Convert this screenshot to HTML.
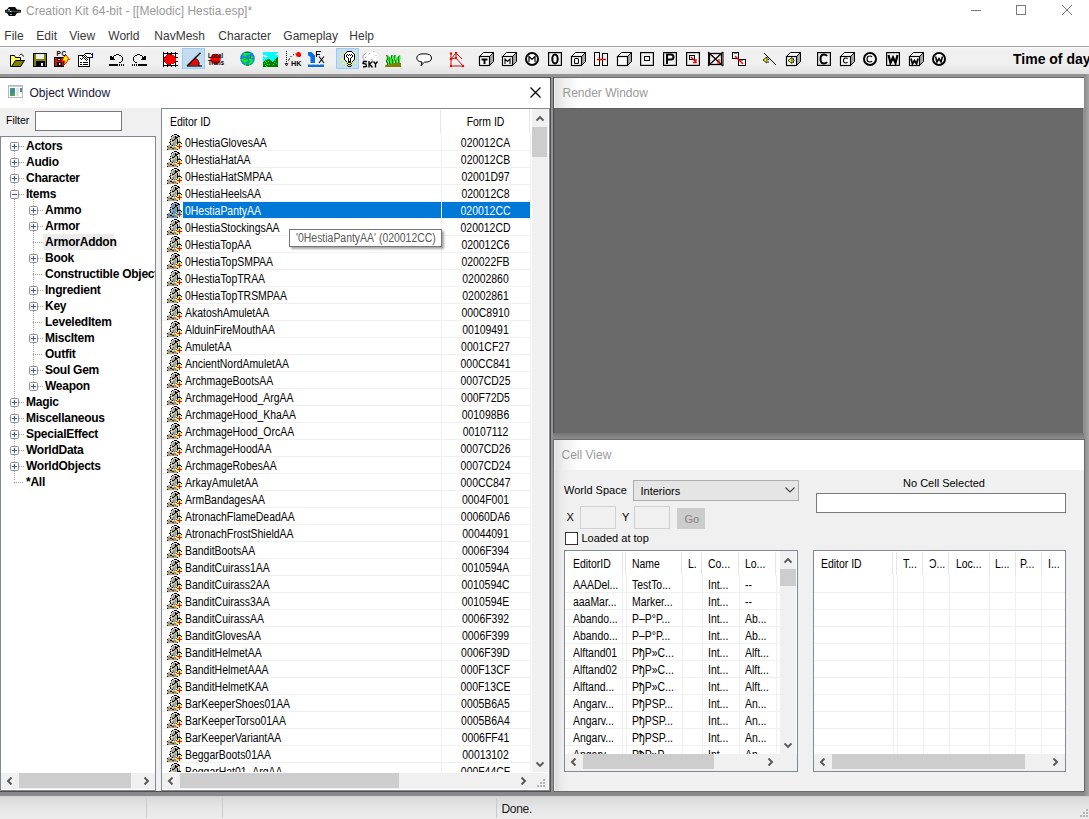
<!DOCTYPE html>
<html><head><meta charset="utf-8">
<style>
*{box-sizing:border-box}
html,body{margin:0;padding:0}
body{width:1089px;height:819px;overflow:hidden;position:relative;background:#f0f0f0;font-family:"Liberation Sans",sans-serif;font-size:11px;color:#000}
.a{position:absolute}
.t{position:absolute;white-space:nowrap;line-height:1}
.ic{position:absolute;overflow:visible}
</style></head><body>
<svg width="0" height="0" style="position:absolute">
<defs>
<symbol id="arm" viewBox="0 0 16 16" shape-rendering="crispEdges"><rect x="7" y="0" width="3" height="1" fill="#000"/><rect x="5" y="1" width="1" height="1" fill="#000"/><rect x="6" y="1" width="1" height="1" fill="#a8a8a8"/><rect x="7" y="1" width="3" height="1" fill="#e0e0e0"/><rect x="10" y="1" width="2" height="1" fill="#000"/><rect x="4" y="2" width="1" height="1" fill="#000"/><rect x="5" y="2" width="1" height="1" fill="#e0e0e0"/><rect x="6" y="2" width="2" height="1" fill="#a8a8a8"/><rect x="8" y="2" width="1" height="1" fill="#000"/><rect x="9" y="2" width="2" height="1" fill="#a8a8a8"/><rect x="11" y="2" width="2" height="1" fill="#000"/><rect x="4" y="3" width="1" height="1" fill="#a8a8a8"/><rect x="5" y="3" width="1" height="1" fill="#e0e0e0"/><rect x="6" y="3" width="1" height="1" fill="#808080"/><rect x="7" y="3" width="1" height="1" fill="#a8a8a8"/><rect x="8" y="3" width="3" height="1" fill="#000"/><rect x="11" y="3" width="1" height="1" fill="#e0e0e0"/><rect x="12" y="3" width="1" height="1" fill="#a8a8a8"/><rect x="4" y="4" width="4" height="1" fill="#a8a8a8"/><rect x="8" y="4" width="1" height="1" fill="#000"/><rect x="9" y="4" width="1" height="1" fill="#a00000"/><rect x="10" y="4" width="1" height="1" fill="#ffff00"/><rect x="11" y="4" width="1" height="1" fill="#e0e0e0"/><rect x="12" y="4" width="1" height="1" fill="#a8a8a8"/><rect x="3" y="5" width="1" height="1" fill="#000"/><rect x="4" y="5" width="1" height="1" fill="#a8a8a8"/><rect x="5" y="5" width="1" height="1" fill="#808080"/><rect x="6" y="5" width="1" height="1" fill="#a8a8a8"/><rect x="7" y="5" width="1" height="1" fill="#000"/><rect x="8" y="5" width="1" height="1" fill="#a0a000"/><rect x="9" y="5" width="1" height="1" fill="#a8a8a8"/><rect x="10" y="5" width="1" height="1" fill="#000"/><rect x="11" y="5" width="1" height="1" fill="#e0e0e0"/><rect x="12" y="5" width="1" height="1" fill="#a8a8a8"/><rect x="3" y="6" width="1" height="1" fill="#a8a8a8"/><rect x="5" y="6" width="2" height="1" fill="#000"/><rect x="7" y="6" width="1" height="1" fill="#a0a000"/><rect x="8" y="6" width="2" height="1" fill="#c4c4d8"/><rect x="10" y="6" width="1" height="1" fill="#000"/><rect x="11" y="6" width="1" height="1" fill="#e0e0e0"/><rect x="12" y="6" width="1" height="1" fill="#a8a8a8"/><rect x="3" y="7" width="1" height="1" fill="#000"/><rect x="4" y="7" width="1" height="1" fill="#a8a8a8"/><rect x="5" y="7" width="1" height="1" fill="#a0a000"/><rect x="6" y="7" width="2" height="1" fill="#c4c4d8"/><rect x="8" y="7" width="1" height="1" fill="#808080"/><rect x="9" y="7" width="1" height="1" fill="#c4c4d8"/><rect x="10" y="7" width="1" height="1" fill="#000"/><rect x="11" y="7" width="1" height="1" fill="#a8a8a8"/><rect x="12" y="7" width="1" height="1" fill="#008888"/><rect x="2" y="8" width="1" height="1" fill="#000"/><rect x="3" y="8" width="1" height="1" fill="#a0a000"/><rect x="4" y="8" width="2" height="1" fill="#e0e0e0"/><rect x="6" y="8" width="4" height="1" fill="#a8a8a8"/><rect x="10" y="8" width="4" height="1" fill="#000"/><rect x="3" y="9" width="1" height="1" fill="#000"/><rect x="4" y="9" width="1" height="1" fill="#e0e0e0"/><rect x="5" y="9" width="1" height="1" fill="#a8a8a8"/><rect x="6" y="9" width="1" height="1" fill="#808080"/><rect x="7" y="9" width="3" height="1" fill="#a8a8a8"/><rect x="10" y="9" width="1" height="1" fill="#000"/><rect x="11" y="9" width="3" height="1" fill="#ffff00"/><rect x="14" y="9" width="1" height="1" fill="#000"/><rect x="3" y="10" width="1" height="1" fill="#000"/><rect x="4" y="10" width="2" height="1" fill="#a8a8a8"/><rect x="6" y="10" width="1" height="1" fill="#808080"/><rect x="7" y="10" width="2" height="1" fill="#a8a8a8"/><rect x="10" y="10" width="1" height="1" fill="#008000"/><rect x="11" y="10" width="1" height="1" fill="#c8eeee"/><rect x="12" y="10" width="1" height="1" fill="#ff0000"/><rect x="13" y="10" width="1" height="1" fill="#c8eeee"/><rect x="14" y="10" width="1" height="1" fill="#ffff00"/><rect x="1" y="11" width="2" height="1" fill="#a8a8a8"/><rect x="4" y="11" width="1" height="1" fill="#a0a000"/><rect x="5" y="11" width="1" height="1" fill="#000"/><rect x="6" y="11" width="1" height="1" fill="#a8a8a8"/><rect x="7" y="11" width="1" height="1" fill="#808080"/><rect x="8" y="11" width="1" height="1" fill="#a8a8a8"/><rect x="9" y="11" width="1" height="1" fill="#008000"/><rect x="10" y="11" width="2" height="1" fill="#c8eeee"/><rect x="12" y="11" width="1" height="1" fill="#ff0000"/><rect x="13" y="11" width="1" height="1" fill="#c8eeee"/><rect x="0" y="12" width="1" height="1" fill="#000"/><rect x="1" y="12" width="2" height="1" fill="#a8a8a8"/><rect x="3" y="12" width="2" height="1" fill="#a0a000"/><rect x="5" y="12" width="2" height="1" fill="#e0e0e0"/><rect x="7" y="12" width="1" height="1" fill="#a8a8a8"/><rect x="9" y="12" width="1" height="1" fill="#ffff00"/><rect x="10" y="12" width="5" height="1" fill="#ff0000"/><rect x="0" y="13" width="1" height="1" fill="#a8a8a8"/><rect x="1" y="13" width="1" height="1" fill="#808080"/><rect x="2" y="13" width="1" height="1" fill="#a8a8a8"/><rect x="3" y="13" width="2" height="1" fill="#000"/><rect x="5" y="13" width="2" height="1" fill="#a8a8a8"/><rect x="7" y="13" width="2" height="1" fill="#a0a000"/><rect x="9" y="13" width="1" height="1" fill="#ffff00"/><rect x="10" y="13" width="2" height="1" fill="#c8eeee"/><rect x="12" y="13" width="1" height="1" fill="#ff0000"/><rect x="13" y="13" width="1" height="1" fill="#c8eeee"/><rect x="0" y="14" width="2" height="1" fill="#a8a8a8"/><rect x="2" y="14" width="1" height="1" fill="#a0a000"/><rect x="3" y="14" width="2" height="1" fill="#a8a8a8"/><rect x="5" y="14" width="2" height="1" fill="#a00000"/><rect x="7" y="14" width="1" height="1" fill="#a8a8a8"/><rect x="8" y="14" width="1" height="1" fill="#808080"/><rect x="9" y="14" width="1" height="1" fill="#a8a8a8"/><rect x="10" y="14" width="1" height="1" fill="#ffff00"/><rect x="12" y="14" width="1" height="1" fill="#ff0000"/><rect x="14" y="14" width="1" height="1" fill="#ffff00"/><rect x="0" y="15" width="1" height="1" fill="#000"/><rect x="1" y="15" width="1" height="1" fill="#a0a000"/><rect x="2" y="15" width="4" height="1" fill="#a8a8a8"/><rect x="6" y="15" width="1" height="1" fill="#808080"/><rect x="7" y="15" width="3" height="1" fill="#a8a8a8"/><rect x="10" y="15" width="1" height="1" fill="#000"/></symbol>
<symbol id="arms" viewBox="0 0 16 16" shape-rendering="crispEdges"><rect x="7" y="0" width="3" height="1" fill="#000"/><rect x="5" y="1" width="1" height="1" fill="#000"/><rect x="6" y="1" width="1" height="1" fill="#6d97b8"/><rect x="7" y="1" width="3" height="1" fill="#91bbdc"/><rect x="10" y="1" width="2" height="1" fill="#000"/><rect x="4" y="2" width="1" height="1" fill="#000"/><rect x="5" y="2" width="1" height="1" fill="#91bbdc"/><rect x="6" y="2" width="2" height="1" fill="#6d97b8"/><rect x="8" y="2" width="1" height="1" fill="#000"/><rect x="9" y="2" width="2" height="1" fill="#6d97b8"/><rect x="11" y="2" width="2" height="1" fill="#000"/><rect x="4" y="3" width="1" height="1" fill="#6d97b8"/><rect x="5" y="3" width="1" height="1" fill="#91bbdc"/><rect x="6" y="3" width="1" height="1" fill="#537d9e"/><rect x="7" y="3" width="1" height="1" fill="#6d97b8"/><rect x="8" y="3" width="3" height="1" fill="#000"/><rect x="11" y="3" width="1" height="1" fill="#91bbdc"/><rect x="12" y="3" width="1" height="1" fill="#6d97b8"/><rect x="4" y="4" width="4" height="1" fill="#6d97b8"/><rect x="8" y="4" width="1" height="1" fill="#000"/><rect x="9" y="4" width="1" height="1" fill="#682a4b"/><rect x="10" y="4" width="1" height="1" fill="#a5cf4b"/><rect x="11" y="4" width="1" height="1" fill="#91bbdc"/><rect x="12" y="4" width="1" height="1" fill="#6d97b8"/><rect x="3" y="5" width="1" height="1" fill="#000"/><rect x="4" y="5" width="1" height="1" fill="#6d97b8"/><rect x="5" y="5" width="1" height="1" fill="#537d9e"/><rect x="6" y="5" width="1" height="1" fill="#6d97b8"/><rect x="7" y="5" width="1" height="1" fill="#000"/><rect x="8" y="5" width="1" height="1" fill="#68924b"/><rect x="9" y="5" width="1" height="1" fill="#6d97b8"/><rect x="10" y="5" width="1" height="1" fill="#000"/><rect x="11" y="5" width="1" height="1" fill="#91bbdc"/><rect x="12" y="5" width="1" height="1" fill="#6d97b8"/><rect x="3" y="6" width="1" height="1" fill="#6d97b8"/><rect x="5" y="6" width="2" height="1" fill="#000"/><rect x="7" y="6" width="1" height="1" fill="#68924b"/><rect x="8" y="6" width="2" height="1" fill="#7fa9d7"/><rect x="10" y="6" width="1" height="1" fill="#000"/><rect x="11" y="6" width="1" height="1" fill="#91bbdc"/><rect x="12" y="6" width="1" height="1" fill="#6d97b8"/><rect x="3" y="7" width="1" height="1" fill="#000"/><rect x="4" y="7" width="1" height="1" fill="#6d97b8"/><rect x="5" y="7" width="1" height="1" fill="#68924b"/><rect x="6" y="7" width="2" height="1" fill="#7fa9d7"/><rect x="8" y="7" width="1" height="1" fill="#537d9e"/><rect x="9" y="7" width="1" height="1" fill="#7fa9d7"/><rect x="10" y="7" width="1" height="1" fill="#000"/><rect x="11" y="7" width="1" height="1" fill="#6d97b8"/><rect x="12" y="7" width="1" height="1" fill="#0082a3"/><rect x="2" y="8" width="1" height="1" fill="#000"/><rect x="3" y="8" width="1" height="1" fill="#68924b"/><rect x="4" y="8" width="2" height="1" fill="#91bbdc"/><rect x="6" y="8" width="4" height="1" fill="#6d97b8"/><rect x="10" y="8" width="4" height="1" fill="#000"/><rect x="3" y="9" width="1" height="1" fill="#000"/><rect x="4" y="9" width="1" height="1" fill="#91bbdc"/><rect x="5" y="9" width="1" height="1" fill="#6d97b8"/><rect x="6" y="9" width="1" height="1" fill="#537d9e"/><rect x="7" y="9" width="3" height="1" fill="#6d97b8"/><rect x="10" y="9" width="1" height="1" fill="#000"/><rect x="11" y="9" width="3" height="1" fill="#a5cf4b"/><rect x="14" y="9" width="1" height="1" fill="#000"/><rect x="3" y="10" width="1" height="1" fill="#000"/><rect x="4" y="10" width="2" height="1" fill="#6d97b8"/><rect x="6" y="10" width="1" height="1" fill="#537d9e"/><rect x="7" y="10" width="2" height="1" fill="#6d97b8"/><rect x="10" y="10" width="1" height="1" fill="#007d4b"/><rect x="11" y="10" width="1" height="1" fill="#82c4e5"/><rect x="12" y="10" width="1" height="1" fill="#a52a4b"/><rect x="13" y="10" width="1" height="1" fill="#82c4e5"/><rect x="14" y="10" width="1" height="1" fill="#a5cf4b"/><rect x="1" y="11" width="2" height="1" fill="#6d97b8"/><rect x="4" y="11" width="1" height="1" fill="#68924b"/><rect x="5" y="11" width="1" height="1" fill="#000"/><rect x="6" y="11" width="1" height="1" fill="#6d97b8"/><rect x="7" y="11" width="1" height="1" fill="#537d9e"/><rect x="8" y="11" width="1" height="1" fill="#6d97b8"/><rect x="9" y="11" width="1" height="1" fill="#007d4b"/><rect x="10" y="11" width="2" height="1" fill="#82c4e5"/><rect x="12" y="11" width="1" height="1" fill="#a52a4b"/><rect x="13" y="11" width="1" height="1" fill="#82c4e5"/><rect x="0" y="12" width="1" height="1" fill="#000"/><rect x="1" y="12" width="2" height="1" fill="#6d97b8"/><rect x="3" y="12" width="2" height="1" fill="#68924b"/><rect x="5" y="12" width="2" height="1" fill="#91bbdc"/><rect x="7" y="12" width="1" height="1" fill="#6d97b8"/><rect x="9" y="12" width="1" height="1" fill="#a5cf4b"/><rect x="10" y="12" width="5" height="1" fill="#a52a4b"/><rect x="0" y="13" width="1" height="1" fill="#6d97b8"/><rect x="1" y="13" width="1" height="1" fill="#537d9e"/><rect x="2" y="13" width="1" height="1" fill="#6d97b8"/><rect x="3" y="13" width="2" height="1" fill="#000"/><rect x="5" y="13" width="2" height="1" fill="#6d97b8"/><rect x="7" y="13" width="2" height="1" fill="#68924b"/><rect x="9" y="13" width="1" height="1" fill="#a5cf4b"/><rect x="10" y="13" width="2" height="1" fill="#82c4e5"/><rect x="12" y="13" width="1" height="1" fill="#a52a4b"/><rect x="13" y="13" width="1" height="1" fill="#82c4e5"/><rect x="0" y="14" width="2" height="1" fill="#6d97b8"/><rect x="2" y="14" width="1" height="1" fill="#68924b"/><rect x="3" y="14" width="2" height="1" fill="#6d97b8"/><rect x="5" y="14" width="2" height="1" fill="#682a4b"/><rect x="7" y="14" width="1" height="1" fill="#6d97b8"/><rect x="8" y="14" width="1" height="1" fill="#537d9e"/><rect x="9" y="14" width="1" height="1" fill="#6d97b8"/><rect x="10" y="14" width="1" height="1" fill="#a5cf4b"/><rect x="12" y="14" width="1" height="1" fill="#a52a4b"/><rect x="14" y="14" width="1" height="1" fill="#a5cf4b"/><rect x="0" y="15" width="1" height="1" fill="#000"/><rect x="1" y="15" width="1" height="1" fill="#68924b"/><rect x="2" y="15" width="4" height="1" fill="#6d97b8"/><rect x="6" y="15" width="1" height="1" fill="#537d9e"/><rect x="7" y="15" width="3" height="1" fill="#6d97b8"/><rect x="10" y="15" width="1" height="1" fill="#000"/></symbol>

<symbol id="chevL" viewBox="0 0 8 8"><path d="M5.5 0.5 L2 4 L5.5 7.5" fill="none" stroke="#555" stroke-width="1.9"/></symbol>
<symbol id="chevR" viewBox="0 0 8 8"><path d="M2.5 0.5 L6 4 L2.5 7.5" fill="none" stroke="#555" stroke-width="1.9"/></symbol>
<symbol id="chevU" viewBox="0 0 8 8"><path d="M0.5 5.5 L4 2 L7.5 5.5" fill="none" stroke="#555" stroke-width="1.9"/></symbol>
<symbol id="chevD" viewBox="0 0 8 8"><path d="M0.5 2.5 L4 6 L7.5 2.5" fill="none" stroke="#555" stroke-width="1.9"/></symbol>
<symbol id="plus" viewBox="0 0 9 9"><rect x="0.5" y="0.5" width="8" height="8" rx="1" fill="#f6f6f6" stroke="#919191"/><path d="M2 4.5 L7 4.5 M4.5 2 L4.5 7" stroke="#3b5aa0" stroke-width="1"/></symbol>
<symbol id="minus" viewBox="0 0 9 9"><rect x="0.5" y="0.5" width="8" height="8" rx="1" fill="#f6f6f6" stroke="#919191"/><path d="M2 4.5 L7 4.5" stroke="#3b5aa0" stroke-width="1"/></symbol>
<symbol id="grip" viewBox="0 0 8 8"><g fill="#b4b4b4"><rect x="6" y="0" width="2" height="2"/><rect x="3" y="3" width="2" height="2"/><rect x="6" y="3" width="2" height="2"/><rect x="0" y="6" width="2" height="2"/><rect x="3" y="6" width="2" height="2"/><rect x="6" y="6" width="2" height="2"/></g></symbol>
</defs>
</svg>
<div class="a" style="left:0px;top:0px;width:1089px;height:23px;background:#fff"></div>
<div class="t" style="left:26px;top:4.84px;font-size:12px;color:#9a9a9a">Creation Kit 64-bit - [[Melodic] Hestia.esp]*</div>
<svg class="ic" style="left:5px;top:7px" width="16" height="9" viewBox="0 0 16 9"><path d="M4 0 L10 0 L12 2.5 L16 3 L16 5.5 L12 6 L10 9 L4 9 L2 6 L0 5.5 L0 3 L2 2.5 Z" fill="#0a0a0a"/><path d="M0.5 4.3 L15.5 4.3" stroke="#7a9aa0" stroke-width="0.6"/><rect x="3" y="2" width="2" height="1.5" fill="#a0d0e0"/><rect x="5" y="4" width="1.5" height="1" fill="#c0e8f0"/><rect x="5" y="7" width="2" height="1" fill="#90c0d0"/></svg>
<div class="a" style="left:971px;top:10px;width:10px;height:1px;background:#7a7a7a"></div>
<div class="a" style="left:1016px;top:5px;width:10px;height:10px;border:1px solid #7a7a7a"></div>
<svg class="ic" style="left:1062px;top:5px" width="10" height="10" viewBox="0 0 10 10"><path d="M0 0 L10 10 M10 0 L0 10" stroke="#7a7a7a" stroke-width="1"/></svg>
<div class="a" style="left:0px;top:23px;width:1089px;height:23px;background:#fff"></div>
<div class="t" style="left:4.3px;top:29.84px;font-size:12px;color:#383838">File</div>
<div class="t" style="left:36.3px;top:29.84px;font-size:12px;color:#383838">Edit</div>
<div class="t" style="left:69.3px;top:29.84px;font-size:12px;color:#383838">View</div>
<div class="t" style="left:108.3px;top:29.84px;font-size:12px;color:#383838">World</div>
<div class="t" style="left:154.3px;top:29.84px;font-size:12px;color:#383838">NavMesh</div>
<div class="t" style="left:218.3px;top:29.84px;font-size:12px;color:#383838">Character</div>
<div class="t" style="left:283.3px;top:29.84px;font-size:12px;color:#383838">Gameplay</div>
<div class="t" style="left:349.3px;top:29.84px;font-size:12px;color:#383838">Help</div>
<div class="a" style="left:0px;top:46px;width:1089px;height:28px;border-top:1px solid #a0a0a0;background:linear-gradient(#ffffff 0px,#f0f0f0 2px,#efefef 18px,#e2e2e2 27px)"></div>
<div class="a" style="left:0px;top:74px;width:1089px;height:722px;background:#939393"></div>
<div class="a" style="left:0px;top:792px;width:1089px;height:4px;background:linear-gradient(#858585,#8c8c8c)"></div>
<div class="a" style="left:0px;top:796px;width:1089px;height:23px;background:linear-gradient(#d0d0d0,#dadada 2px,#e6e6e6 12px,#ececec 22px)"></div>
<div class="a" style="left:146px;top:798px;width:1px;height:20px;background:#cbcbcb"></div>
<div class="a" style="left:222px;top:798px;width:1px;height:20px;background:#cbcbcb"></div>
<div class="a" style="left:496px;top:798px;width:1px;height:20px;background:#cbcbcb"></div>
<svg class="ic" style="left:1080px;top:809px" width="8" height="8"><use href="#grip"/></svg>
<div class="t" style="left:501.5px;top:802.64px;font-size:12px;color:#1a1a1a;letter-spacing:-0.3px">Done.</div>
<div class="a" style="left:0px;top:77px;width:551px;height:715px;background:#505050"></div>
<div class="a" style="left:0px;top:78px;width:550px;height:713px;background:#f0f0f0"></div>
<div class="a" style="left:0px;top:78px;width:550px;height:30px;background:#fff"></div>
<svg class="ic" style="left:8px;top:85px" width="15" height="13" viewBox="0 0 15 13"><defs><linearGradient id="owg" x1="0" y1="0" x2="0.4" y2="1"><stop offset="0" stop-color="#5a86c0"/><stop offset="0.5" stop-color="#3f8a8a"/><stop offset="1" stop-color="#4aaa5a"/></linearGradient></defs><rect x="0.5" y="0.5" width="14" height="12" fill="#fff" stroke="#b4b8c0"/><rect x="1" y="1" width="13" height="1" fill="#c8ccd4"/><rect x="2" y="3" width="5" height="8" fill="url(#owg)"/><rect x="8" y="3" width="3" height="8" fill="#e2e2e2"/><rect x="12" y="3" width="2" height="4" fill="url(#owg)"/></svg>
<div class="t" style="left:29.5px;top:86.84px;font-size:12px;color:#16163a">Object Window</div>
<svg class="ic" style="left:530px;top:87px" width="11" height="11" viewBox="0 0 11 11"><path d="M0.5 0.5 L10.5 10.5 M10.5 0.5 L0.5 10.5" stroke="#000" stroke-width="1.2"/></svg>
<div class="t" style="left:6px;top:115.11px;font-size:10.5px;">Filter</div>
<div class="a" style="left:35px;top:111px;width:87px;height:20px;background:#fff;border:1px solid #7a7a7a"></div>
<div class="a" style="left:0px;top:136px;width:156px;height:655px;background:#fff;border:1px solid #828790"></div>
<div class="a" style="left:1px;top:137px;width:154px;height:636px;overflow:hidden">
<div class="a" style="left:13px;top:14px;width:1px;height:330px;background-image:linear-gradient(#a0a0a0 50%,transparent 50%);background-size:1px 2px"></div>
<div class="a" style="left:32px;top:62px;width:1px;height:186px;background-image:linear-gradient(#a0a0a0 50%,transparent 50%);background-size:1px 2px"></div>
<div class="a" style="left:14px;top:9px;width:9px;height:1px;background-image:linear-gradient(90deg,#a0a0a0 50%,transparent 50%);background-size:2px 1px"></div>
<svg class="ic" style="left:9px;top:5px" width="9" height="9"><use href="#plus"/></svg>
<div class="t" style="left:25px;top:3.14px;font-size:12px;font-weight:bold;letter-spacing:-0.25px">Actors</div>
<div class="a" style="left:14px;top:25px;width:9px;height:1px;background-image:linear-gradient(90deg,#a0a0a0 50%,transparent 50%);background-size:2px 1px"></div>
<svg class="ic" style="left:9px;top:21px" width="9" height="9"><use href="#plus"/></svg>
<div class="t" style="left:25px;top:19.14px;font-size:12px;font-weight:bold;letter-spacing:-0.25px">Audio</div>
<div class="a" style="left:14px;top:41px;width:9px;height:1px;background-image:linear-gradient(90deg,#a0a0a0 50%,transparent 50%);background-size:2px 1px"></div>
<svg class="ic" style="left:9px;top:37px" width="9" height="9"><use href="#plus"/></svg>
<div class="t" style="left:25px;top:35.14px;font-size:12px;font-weight:bold;letter-spacing:-0.25px">Character</div>
<div class="a" style="left:14px;top:57px;width:9px;height:1px;background-image:linear-gradient(90deg,#a0a0a0 50%,transparent 50%);background-size:2px 1px"></div>
<svg class="ic" style="left:9px;top:53px" width="9" height="9"><use href="#minus"/></svg>
<div class="t" style="left:25px;top:51.14px;font-size:12px;font-weight:bold;letter-spacing:-0.25px">Items</div>
<div class="a" style="left:33px;top:73px;width:9px;height:1px;background-image:linear-gradient(90deg,#a0a0a0 50%,transparent 50%);background-size:2px 1px"></div>
<svg class="ic" style="left:28px;top:69px" width="9" height="9"><use href="#plus"/></svg>
<div class="t" style="left:44px;top:67.14px;font-size:12px;font-weight:bold;letter-spacing:-0.25px">Ammo</div>
<div class="a" style="left:33px;top:89px;width:9px;height:1px;background-image:linear-gradient(90deg,#a0a0a0 50%,transparent 50%);background-size:2px 1px"></div>
<svg class="ic" style="left:28px;top:85px" width="9" height="9"><use href="#plus"/></svg>
<div class="t" style="left:44px;top:83.14px;font-size:12px;font-weight:bold;letter-spacing:-0.25px">Armor</div>
<div class="a" style="left:32px;top:105px;width:10px;height:1px;background-image:linear-gradient(90deg,#a0a0a0 50%,transparent 50%);background-size:2px 1px"></div>
<div class="a" style="left:42px;top:97px;width:71px;height:16px;background:#ececec"></div>
<div class="t" style="left:44px;top:99.14px;font-size:12px;font-weight:bold;letter-spacing:-0.25px">ArmorAddon</div>
<div class="a" style="left:33px;top:121px;width:9px;height:1px;background-image:linear-gradient(90deg,#a0a0a0 50%,transparent 50%);background-size:2px 1px"></div>
<svg class="ic" style="left:28px;top:117px" width="9" height="9"><use href="#plus"/></svg>
<div class="t" style="left:44px;top:115.14px;font-size:12px;font-weight:bold;letter-spacing:-0.25px">Book</div>
<div class="a" style="left:32px;top:137px;width:10px;height:1px;background-image:linear-gradient(90deg,#a0a0a0 50%,transparent 50%);background-size:2px 1px"></div>
<div class="t" style="left:44px;top:131.14px;font-size:12px;font-weight:bold;letter-spacing:-0.25px">Constructible Object</div>
<div class="a" style="left:33px;top:153px;width:9px;height:1px;background-image:linear-gradient(90deg,#a0a0a0 50%,transparent 50%);background-size:2px 1px"></div>
<svg class="ic" style="left:28px;top:149px" width="9" height="9"><use href="#plus"/></svg>
<div class="t" style="left:44px;top:147.14px;font-size:12px;font-weight:bold;letter-spacing:-0.25px">Ingredient</div>
<div class="a" style="left:33px;top:169px;width:9px;height:1px;background-image:linear-gradient(90deg,#a0a0a0 50%,transparent 50%);background-size:2px 1px"></div>
<svg class="ic" style="left:28px;top:165px" width="9" height="9"><use href="#plus"/></svg>
<div class="t" style="left:44px;top:163.14px;font-size:12px;font-weight:bold;letter-spacing:-0.25px">Key</div>
<div class="a" style="left:32px;top:185px;width:10px;height:1px;background-image:linear-gradient(90deg,#a0a0a0 50%,transparent 50%);background-size:2px 1px"></div>
<div class="t" style="left:44px;top:179.14px;font-size:12px;font-weight:bold;letter-spacing:-0.25px">LeveledItem</div>
<div class="a" style="left:33px;top:201px;width:9px;height:1px;background-image:linear-gradient(90deg,#a0a0a0 50%,transparent 50%);background-size:2px 1px"></div>
<svg class="ic" style="left:28px;top:197px" width="9" height="9"><use href="#plus"/></svg>
<div class="t" style="left:44px;top:195.14px;font-size:12px;font-weight:bold;letter-spacing:-0.25px">MiscItem</div>
<div class="a" style="left:32px;top:217px;width:10px;height:1px;background-image:linear-gradient(90deg,#a0a0a0 50%,transparent 50%);background-size:2px 1px"></div>
<div class="t" style="left:44px;top:211.14px;font-size:12px;font-weight:bold;letter-spacing:-0.25px">Outfit</div>
<div class="a" style="left:33px;top:233px;width:9px;height:1px;background-image:linear-gradient(90deg,#a0a0a0 50%,transparent 50%);background-size:2px 1px"></div>
<svg class="ic" style="left:28px;top:229px" width="9" height="9"><use href="#plus"/></svg>
<div class="t" style="left:44px;top:227.14px;font-size:12px;font-weight:bold;letter-spacing:-0.25px">Soul Gem</div>
<div class="a" style="left:33px;top:249px;width:9px;height:1px;background-image:linear-gradient(90deg,#a0a0a0 50%,transparent 50%);background-size:2px 1px"></div>
<svg class="ic" style="left:28px;top:245px" width="9" height="9"><use href="#plus"/></svg>
<div class="t" style="left:44px;top:243.14px;font-size:12px;font-weight:bold;letter-spacing:-0.25px">Weapon</div>
<div class="a" style="left:14px;top:265px;width:9px;height:1px;background-image:linear-gradient(90deg,#a0a0a0 50%,transparent 50%);background-size:2px 1px"></div>
<svg class="ic" style="left:9px;top:261px" width="9" height="9"><use href="#plus"/></svg>
<div class="t" style="left:25px;top:259.14px;font-size:12px;font-weight:bold;letter-spacing:-0.25px">Magic</div>
<div class="a" style="left:14px;top:281px;width:9px;height:1px;background-image:linear-gradient(90deg,#a0a0a0 50%,transparent 50%);background-size:2px 1px"></div>
<svg class="ic" style="left:9px;top:277px" width="9" height="9"><use href="#plus"/></svg>
<div class="t" style="left:25px;top:275.14px;font-size:12px;font-weight:bold;letter-spacing:-0.25px">Miscellaneous</div>
<div class="a" style="left:14px;top:297px;width:9px;height:1px;background-image:linear-gradient(90deg,#a0a0a0 50%,transparent 50%);background-size:2px 1px"></div>
<svg class="ic" style="left:9px;top:293px" width="9" height="9"><use href="#plus"/></svg>
<div class="t" style="left:25px;top:291.14px;font-size:12px;font-weight:bold;letter-spacing:-0.25px">SpecialEffect</div>
<div class="a" style="left:14px;top:313px;width:9px;height:1px;background-image:linear-gradient(90deg,#a0a0a0 50%,transparent 50%);background-size:2px 1px"></div>
<svg class="ic" style="left:9px;top:309px" width="9" height="9"><use href="#plus"/></svg>
<div class="t" style="left:25px;top:307.14px;font-size:12px;font-weight:bold;letter-spacing:-0.25px">WorldData</div>
<div class="a" style="left:14px;top:329px;width:9px;height:1px;background-image:linear-gradient(90deg,#a0a0a0 50%,transparent 50%);background-size:2px 1px"></div>
<svg class="ic" style="left:9px;top:325px" width="9" height="9"><use href="#plus"/></svg>
<div class="t" style="left:25px;top:323.14px;font-size:12px;font-weight:bold;letter-spacing:-0.25px">WorldObjects</div>
<div class="a" style="left:13px;top:345px;width:10px;height:1px;background-image:linear-gradient(90deg,#a0a0a0 50%,transparent 50%);background-size:2px 1px"></div>
<div class="t" style="left:25px;top:339.14px;font-size:12px;font-weight:bold;letter-spacing:-0.25px">*All</div>
</div>
<div class="a" style="left:1px;top:773px;width:154px;height:16px;background:#f0f0f0"></div>
<div class="a" style="left:19px;top:773px;width:112px;height:15px;background:#cdcdcd"></div>
<svg class="ic" style="left:6px;top:777px" width="8" height="8"><use href="#chevL"/></svg>
<svg class="ic" style="left:142px;top:777px" width="8" height="8"><use href="#chevR"/></svg>
<div class="a" style="left:161px;top:108px;width:389px;height:683px;background:#fff;border:1px solid #828790"></div>
<div class="t" style="left:170px;top:115.74px;font-size:12px;transform:scaleX(0.87);transform-origin:0 0">Editor ID</div>
<div class="t" style="left:441px;width:89px;text-align:center;top:115.74px;font-size:12px;transform:scaleX(0.87)">Form ID</div>
<div class="a" style="left:440px;top:110px;width:1px;height:23px;background:#e5e5e5"></div>
<div class="a" style="left:529px;top:110px;width:1px;height:23px;background:#e5e5e5"></div>
<div class="a" style="left:162px;top:133px;width:369px;height:639px;overflow:hidden">
<div class="a" style="left:279px;top:0px;width:1px;height:700px;background:#f0f0f0"></div>
<div class="a" style="left:368px;top:0px;width:1px;height:700px;background:#f0f0f0"></div>
<div class="a" style="left:0px;top:17px;width:369px;height:1px;background:#f0f0f0"></div>
<svg class="ic" style="left:5px;top:1px" width="16" height="16"><use href="#arm"/></svg>
<div class="t" style="left:23px;top:3.64px;font-size:12px;;transform:scaleX(0.87);transform-origin:0 0">0HestiaGlovesAA</div>
<div class="t" style="left:279px;width:89px;text-align:center;top:3.64px;font-size:12px;transform:scaleX(0.87);">020012CA</div>
<div class="a" style="left:0px;top:34px;width:369px;height:1px;background:#f0f0f0"></div>
<svg class="ic" style="left:5px;top:18px" width="16" height="16"><use href="#arm"/></svg>
<div class="t" style="left:23px;top:20.64px;font-size:12px;;transform:scaleX(0.87);transform-origin:0 0">0HestiaHatAA</div>
<div class="t" style="left:279px;width:89px;text-align:center;top:20.64px;font-size:12px;transform:scaleX(0.87);">020012CB</div>
<div class="a" style="left:0px;top:51px;width:369px;height:1px;background:#f0f0f0"></div>
<svg class="ic" style="left:5px;top:35px" width="16" height="16"><use href="#arm"/></svg>
<div class="t" style="left:23px;top:37.64px;font-size:12px;;transform:scaleX(0.87);transform-origin:0 0">0HestiaHatSMPAA</div>
<div class="t" style="left:279px;width:89px;text-align:center;top:37.64px;font-size:12px;transform:scaleX(0.87);">02001D97</div>
<div class="a" style="left:0px;top:68px;width:369px;height:1px;background:#f0f0f0"></div>
<svg class="ic" style="left:5px;top:52px" width="16" height="16"><use href="#arm"/></svg>
<div class="t" style="left:23px;top:54.64px;font-size:12px;;transform:scaleX(0.87);transform-origin:0 0">0HestiaHeelsAA</div>
<div class="t" style="left:279px;width:89px;text-align:center;top:54.64px;font-size:12px;transform:scaleX(0.87);">020012C8</div>
<div class="a" style="left:0px;top:85px;width:369px;height:1px;background:#f0f0f0"></div>
<div class="a" style="left:21px;top:69px;width:258px;height:16px;background:#0078d7"></div>
<div class="a" style="left:280px;top:69px;width:88px;height:16px;background:#0078d7"></div>
<svg class="ic" style="left:5px;top:69px" width="16" height="16"><use href="#arms"/></svg>
<div class="t" style="left:23px;top:71.64px;font-size:12px;color:#fff;transform:scaleX(0.87);transform-origin:0 0">0HestiaPantyAA</div>
<div class="t" style="left:279px;width:89px;text-align:center;top:71.64px;font-size:12px;transform:scaleX(0.87);color:#fff">020012CC</div>
<div class="a" style="left:0px;top:102px;width:369px;height:1px;background:#f0f0f0"></div>
<svg class="ic" style="left:5px;top:86px" width="16" height="16"><use href="#arm"/></svg>
<div class="t" style="left:23px;top:88.64px;font-size:12px;;transform:scaleX(0.87);transform-origin:0 0">0HestiaStockingsAA</div>
<div class="t" style="left:279px;width:89px;text-align:center;top:88.64px;font-size:12px;transform:scaleX(0.87);">020012CD</div>
<div class="a" style="left:0px;top:119px;width:369px;height:1px;background:#f0f0f0"></div>
<svg class="ic" style="left:5px;top:103px" width="16" height="16"><use href="#arm"/></svg>
<div class="t" style="left:23px;top:105.64px;font-size:12px;;transform:scaleX(0.87);transform-origin:0 0">0HestiaTopAA</div>
<div class="t" style="left:279px;width:89px;text-align:center;top:105.64px;font-size:12px;transform:scaleX(0.87);">020012C6</div>
<div class="a" style="left:0px;top:136px;width:369px;height:1px;background:#f0f0f0"></div>
<svg class="ic" style="left:5px;top:120px" width="16" height="16"><use href="#arm"/></svg>
<div class="t" style="left:23px;top:122.64px;font-size:12px;;transform:scaleX(0.87);transform-origin:0 0">0HestiaTopSMPAA</div>
<div class="t" style="left:279px;width:89px;text-align:center;top:122.64px;font-size:12px;transform:scaleX(0.87);">020022FB</div>
<div class="a" style="left:0px;top:153px;width:369px;height:1px;background:#f0f0f0"></div>
<svg class="ic" style="left:5px;top:137px" width="16" height="16"><use href="#arm"/></svg>
<div class="t" style="left:23px;top:139.64px;font-size:12px;;transform:scaleX(0.87);transform-origin:0 0">0HestiaTopTRAA</div>
<div class="t" style="left:279px;width:89px;text-align:center;top:139.64px;font-size:12px;transform:scaleX(0.87);">02002860</div>
<div class="a" style="left:0px;top:170px;width:369px;height:1px;background:#f0f0f0"></div>
<svg class="ic" style="left:5px;top:154px" width="16" height="16"><use href="#arm"/></svg>
<div class="t" style="left:23px;top:156.64px;font-size:12px;;transform:scaleX(0.87);transform-origin:0 0">0HestiaTopTRSMPAA</div>
<div class="t" style="left:279px;width:89px;text-align:center;top:156.64px;font-size:12px;transform:scaleX(0.87);">02002861</div>
<div class="a" style="left:0px;top:187px;width:369px;height:1px;background:#f0f0f0"></div>
<svg class="ic" style="left:5px;top:171px" width="16" height="16"><use href="#arm"/></svg>
<div class="t" style="left:23px;top:173.64px;font-size:12px;;transform:scaleX(0.87);transform-origin:0 0">AkatoshAmuletAA</div>
<div class="t" style="left:279px;width:89px;text-align:center;top:173.64px;font-size:12px;transform:scaleX(0.87);">000C8910</div>
<div class="a" style="left:0px;top:204px;width:369px;height:1px;background:#f0f0f0"></div>
<svg class="ic" style="left:5px;top:188px" width="16" height="16"><use href="#arm"/></svg>
<div class="t" style="left:23px;top:190.64px;font-size:12px;;transform:scaleX(0.87);transform-origin:0 0">AlduinFireMouthAA</div>
<div class="t" style="left:279px;width:89px;text-align:center;top:190.64px;font-size:12px;transform:scaleX(0.87);">00109491</div>
<div class="a" style="left:0px;top:221px;width:369px;height:1px;background:#f0f0f0"></div>
<svg class="ic" style="left:5px;top:205px" width="16" height="16"><use href="#arm"/></svg>
<div class="t" style="left:23px;top:207.64px;font-size:12px;;transform:scaleX(0.87);transform-origin:0 0">AmuletAA</div>
<div class="t" style="left:279px;width:89px;text-align:center;top:207.64px;font-size:12px;transform:scaleX(0.87);">0001CF27</div>
<div class="a" style="left:0px;top:238px;width:369px;height:1px;background:#f0f0f0"></div>
<svg class="ic" style="left:5px;top:222px" width="16" height="16"><use href="#arm"/></svg>
<div class="t" style="left:23px;top:224.64px;font-size:12px;;transform:scaleX(0.87);transform-origin:0 0">AncientNordAmuletAA</div>
<div class="t" style="left:279px;width:89px;text-align:center;top:224.64px;font-size:12px;transform:scaleX(0.87);">000CC841</div>
<div class="a" style="left:0px;top:255px;width:369px;height:1px;background:#f0f0f0"></div>
<svg class="ic" style="left:5px;top:239px" width="16" height="16"><use href="#arm"/></svg>
<div class="t" style="left:23px;top:241.64px;font-size:12px;;transform:scaleX(0.87);transform-origin:0 0">ArchmageBootsAA</div>
<div class="t" style="left:279px;width:89px;text-align:center;top:241.64px;font-size:12px;transform:scaleX(0.87);">0007CD25</div>
<div class="a" style="left:0px;top:272px;width:369px;height:1px;background:#f0f0f0"></div>
<svg class="ic" style="left:5px;top:256px" width="16" height="16"><use href="#arm"/></svg>
<div class="t" style="left:23px;top:258.64px;font-size:12px;;transform:scaleX(0.87);transform-origin:0 0">ArchmageHood_ArgAA</div>
<div class="t" style="left:279px;width:89px;text-align:center;top:258.64px;font-size:12px;transform:scaleX(0.87);">000F72D5</div>
<div class="a" style="left:0px;top:289px;width:369px;height:1px;background:#f0f0f0"></div>
<svg class="ic" style="left:5px;top:273px" width="16" height="16"><use href="#arm"/></svg>
<div class="t" style="left:23px;top:275.64px;font-size:12px;;transform:scaleX(0.87);transform-origin:0 0">ArchmageHood_KhaAA</div>
<div class="t" style="left:279px;width:89px;text-align:center;top:275.64px;font-size:12px;transform:scaleX(0.87);">001098B6</div>
<div class="a" style="left:0px;top:306px;width:369px;height:1px;background:#f0f0f0"></div>
<svg class="ic" style="left:5px;top:290px" width="16" height="16"><use href="#arm"/></svg>
<div class="t" style="left:23px;top:292.64px;font-size:12px;;transform:scaleX(0.87);transform-origin:0 0">ArchmageHood_OrcAA</div>
<div class="t" style="left:279px;width:89px;text-align:center;top:292.64px;font-size:12px;transform:scaleX(0.87);">00107112</div>
<div class="a" style="left:0px;top:323px;width:369px;height:1px;background:#f0f0f0"></div>
<svg class="ic" style="left:5px;top:307px" width="16" height="16"><use href="#arm"/></svg>
<div class="t" style="left:23px;top:309.64px;font-size:12px;;transform:scaleX(0.87);transform-origin:0 0">ArchmageHoodAA</div>
<div class="t" style="left:279px;width:89px;text-align:center;top:309.64px;font-size:12px;transform:scaleX(0.87);">0007CD26</div>
<div class="a" style="left:0px;top:340px;width:369px;height:1px;background:#f0f0f0"></div>
<svg class="ic" style="left:5px;top:324px" width="16" height="16"><use href="#arm"/></svg>
<div class="t" style="left:23px;top:326.64px;font-size:12px;;transform:scaleX(0.87);transform-origin:0 0">ArchmageRobesAA</div>
<div class="t" style="left:279px;width:89px;text-align:center;top:326.64px;font-size:12px;transform:scaleX(0.87);">0007CD24</div>
<div class="a" style="left:0px;top:357px;width:369px;height:1px;background:#f0f0f0"></div>
<svg class="ic" style="left:5px;top:341px" width="16" height="16"><use href="#arm"/></svg>
<div class="t" style="left:23px;top:343.64px;font-size:12px;;transform:scaleX(0.87);transform-origin:0 0">ArkayAmuletAA</div>
<div class="t" style="left:279px;width:89px;text-align:center;top:343.64px;font-size:12px;transform:scaleX(0.87);">000CC847</div>
<div class="a" style="left:0px;top:374px;width:369px;height:1px;background:#f0f0f0"></div>
<svg class="ic" style="left:5px;top:358px" width="16" height="16"><use href="#arm"/></svg>
<div class="t" style="left:23px;top:360.64px;font-size:12px;;transform:scaleX(0.87);transform-origin:0 0">ArmBandagesAA</div>
<div class="t" style="left:279px;width:89px;text-align:center;top:360.64px;font-size:12px;transform:scaleX(0.87);">0004F001</div>
<div class="a" style="left:0px;top:391px;width:369px;height:1px;background:#f0f0f0"></div>
<svg class="ic" style="left:5px;top:375px" width="16" height="16"><use href="#arm"/></svg>
<div class="t" style="left:23px;top:377.64px;font-size:12px;;transform:scaleX(0.87);transform-origin:0 0">AtronachFlameDeadAA</div>
<div class="t" style="left:279px;width:89px;text-align:center;top:377.64px;font-size:12px;transform:scaleX(0.87);">00060DA6</div>
<div class="a" style="left:0px;top:408px;width:369px;height:1px;background:#f0f0f0"></div>
<svg class="ic" style="left:5px;top:392px" width="16" height="16"><use href="#arm"/></svg>
<div class="t" style="left:23px;top:394.64px;font-size:12px;;transform:scaleX(0.87);transform-origin:0 0">AtronachFrostShieldAA</div>
<div class="t" style="left:279px;width:89px;text-align:center;top:394.64px;font-size:12px;transform:scaleX(0.87);">00044091</div>
<div class="a" style="left:0px;top:425px;width:369px;height:1px;background:#f0f0f0"></div>
<svg class="ic" style="left:5px;top:409px" width="16" height="16"><use href="#arm"/></svg>
<div class="t" style="left:23px;top:411.64px;font-size:12px;;transform:scaleX(0.87);transform-origin:0 0">BanditBootsAA</div>
<div class="t" style="left:279px;width:89px;text-align:center;top:411.64px;font-size:12px;transform:scaleX(0.87);">0006F394</div>
<div class="a" style="left:0px;top:442px;width:369px;height:1px;background:#f0f0f0"></div>
<svg class="ic" style="left:5px;top:426px" width="16" height="16"><use href="#arm"/></svg>
<div class="t" style="left:23px;top:428.64px;font-size:12px;;transform:scaleX(0.87);transform-origin:0 0">BanditCuirass1AA</div>
<div class="t" style="left:279px;width:89px;text-align:center;top:428.64px;font-size:12px;transform:scaleX(0.87);">0010594A</div>
<div class="a" style="left:0px;top:459px;width:369px;height:1px;background:#f0f0f0"></div>
<svg class="ic" style="left:5px;top:443px" width="16" height="16"><use href="#arm"/></svg>
<div class="t" style="left:23px;top:445.64px;font-size:12px;;transform:scaleX(0.87);transform-origin:0 0">BanditCuirass2AA</div>
<div class="t" style="left:279px;width:89px;text-align:center;top:445.64px;font-size:12px;transform:scaleX(0.87);">0010594C</div>
<div class="a" style="left:0px;top:476px;width:369px;height:1px;background:#f0f0f0"></div>
<svg class="ic" style="left:5px;top:460px" width="16" height="16"><use href="#arm"/></svg>
<div class="t" style="left:23px;top:462.64px;font-size:12px;;transform:scaleX(0.87);transform-origin:0 0">BanditCuirass3AA</div>
<div class="t" style="left:279px;width:89px;text-align:center;top:462.64px;font-size:12px;transform:scaleX(0.87);">0010594E</div>
<div class="a" style="left:0px;top:493px;width:369px;height:1px;background:#f0f0f0"></div>
<svg class="ic" style="left:5px;top:477px" width="16" height="16"><use href="#arm"/></svg>
<div class="t" style="left:23px;top:479.64px;font-size:12px;;transform:scaleX(0.87);transform-origin:0 0">BanditCuirassAA</div>
<div class="t" style="left:279px;width:89px;text-align:center;top:479.64px;font-size:12px;transform:scaleX(0.87);">0006F392</div>
<div class="a" style="left:0px;top:510px;width:369px;height:1px;background:#f0f0f0"></div>
<svg class="ic" style="left:5px;top:494px" width="16" height="16"><use href="#arm"/></svg>
<div class="t" style="left:23px;top:496.64px;font-size:12px;;transform:scaleX(0.87);transform-origin:0 0">BanditGlovesAA</div>
<div class="t" style="left:279px;width:89px;text-align:center;top:496.64px;font-size:12px;transform:scaleX(0.87);">0006F399</div>
<div class="a" style="left:0px;top:527px;width:369px;height:1px;background:#f0f0f0"></div>
<svg class="ic" style="left:5px;top:511px" width="16" height="16"><use href="#arm"/></svg>
<div class="t" style="left:23px;top:513.64px;font-size:12px;;transform:scaleX(0.87);transform-origin:0 0">BanditHelmetAA</div>
<div class="t" style="left:279px;width:89px;text-align:center;top:513.64px;font-size:12px;transform:scaleX(0.87);">0006F39D</div>
<div class="a" style="left:0px;top:544px;width:369px;height:1px;background:#f0f0f0"></div>
<svg class="ic" style="left:5px;top:528px" width="16" height="16"><use href="#arm"/></svg>
<div class="t" style="left:23px;top:530.64px;font-size:12px;;transform:scaleX(0.87);transform-origin:0 0">BanditHelmetAAA</div>
<div class="t" style="left:279px;width:89px;text-align:center;top:530.64px;font-size:12px;transform:scaleX(0.87);">000F13CF</div>
<div class="a" style="left:0px;top:561px;width:369px;height:1px;background:#f0f0f0"></div>
<svg class="ic" style="left:5px;top:545px" width="16" height="16"><use href="#arm"/></svg>
<div class="t" style="left:23px;top:547.64px;font-size:12px;;transform:scaleX(0.87);transform-origin:0 0">BanditHelmetKAA</div>
<div class="t" style="left:279px;width:89px;text-align:center;top:547.64px;font-size:12px;transform:scaleX(0.87);">000F13CE</div>
<div class="a" style="left:0px;top:578px;width:369px;height:1px;background:#f0f0f0"></div>
<svg class="ic" style="left:5px;top:562px" width="16" height="16"><use href="#arm"/></svg>
<div class="t" style="left:23px;top:564.64px;font-size:12px;;transform:scaleX(0.87);transform-origin:0 0">BarKeeperShoes01AA</div>
<div class="t" style="left:279px;width:89px;text-align:center;top:564.64px;font-size:12px;transform:scaleX(0.87);">0005B6A5</div>
<div class="a" style="left:0px;top:595px;width:369px;height:1px;background:#f0f0f0"></div>
<svg class="ic" style="left:5px;top:579px" width="16" height="16"><use href="#arm"/></svg>
<div class="t" style="left:23px;top:581.64px;font-size:12px;;transform:scaleX(0.87);transform-origin:0 0">BarKeeperTorso01AA</div>
<div class="t" style="left:279px;width:89px;text-align:center;top:581.64px;font-size:12px;transform:scaleX(0.87);">0005B6A4</div>
<div class="a" style="left:0px;top:612px;width:369px;height:1px;background:#f0f0f0"></div>
<svg class="ic" style="left:5px;top:596px" width="16" height="16"><use href="#arm"/></svg>
<div class="t" style="left:23px;top:598.64px;font-size:12px;;transform:scaleX(0.87);transform-origin:0 0">BarKeeperVariantAA</div>
<div class="t" style="left:279px;width:89px;text-align:center;top:598.64px;font-size:12px;transform:scaleX(0.87);">0006FF41</div>
<div class="a" style="left:0px;top:629px;width:369px;height:1px;background:#f0f0f0"></div>
<svg class="ic" style="left:5px;top:613px" width="16" height="16"><use href="#arm"/></svg>
<div class="t" style="left:23px;top:615.64px;font-size:12px;;transform:scaleX(0.87);transform-origin:0 0">BeggarBoots01AA</div>
<div class="t" style="left:279px;width:89px;text-align:center;top:615.64px;font-size:12px;transform:scaleX(0.87);">00013102</div>
<div class="a" style="left:0px;top:646px;width:369px;height:1px;background:#f0f0f0"></div>
<svg class="ic" style="left:5px;top:630px" width="16" height="16"><use href="#arm"/></svg>
<div class="t" style="left:23px;top:632.64px;font-size:12px;;transform:scaleX(0.87);transform-origin:0 0">BeggarHat01_ArgAA</div>
<div class="t" style="left:279px;width:89px;text-align:center;top:632.64px;font-size:12px;transform:scaleX(0.87);">000F44CF</div>
</div>
<div class="a" style="left:532px;top:109px;width:16px;height:663px;background:#f0f0f0"></div>
<div class="a" style="left:532px;top:127px;width:15px;height:30px;background:#cdcdcd"></div>
<svg class="ic" style="left:536px;top:115px" width="8" height="8"><use href="#chevU"/></svg>
<svg class="ic" style="left:536px;top:760px" width="8" height="8"><use href="#chevD"/></svg>
<div class="a" style="left:162px;top:773px;width:386px;height:16px;background:#f0f0f0"></div>
<div class="a" style="left:180px;top:773px;width:219px;height:15px;background:#cdcdcd"></div>
<svg class="ic" style="left:167px;top:777px" width="8" height="8"><use href="#chevL"/></svg>
<svg class="ic" style="left:519px;top:777px" width="8" height="8"><use href="#chevR"/></svg>
<svg class="ic" style="left:537px;top:779px" width="8" height="8"><use href="#grip"/></svg>
<div class="a" style="left:289px;top:229px;width:153px;height:18px;background:#fff;border:1px solid #767676;box-shadow:2px 2px 2px rgba(0,0,0,.35)"></div>
<div class="t" style="left:295.5px;top:232.44px;font-size:12px;color:#575757;transform:scaleX(0.87);transform-origin:0 0">'0HestiaPantyAA' (020012CC)</div>
<div class="a" style="left:1084px;top:74px;width:5px;height:722px;background:linear-gradient(90deg,#8a8a8a,#a6a6a6)"></div>
<div class="a" style="left:553px;top:77px;width:531px;height:1px;background:#6a6a6a"></div>
<div class="a" style="left:553px;top:77px;width:1px;height:357px;background:#505050"></div>
<div class="a" style="left:554px;top:78px;width:530px;height:30px;background:linear-gradient(90deg,#fff 0px,#e0e0e0 1px,#f2f2f2 12px,#fff 26px)"></div>
<div class="t" style="left:562.5px;top:86.84px;font-size:12px;color:#9a9a9a">Render Window</div>
<div class="a" style="left:554px;top:108px;width:529px;height:325px;background:#696969;border-top:1px solid #5c5c5c;border-left:1px solid #606060"></div>
<div class="a" style="left:553px;top:433px;width:531px;height:6px;background:linear-gradient(#767676,#8c8c8c)"></div>
<div class="a" style="left:553px;top:439px;width:532px;height:353px;background:#6a6a6a"></div>
<div class="a" style="left:554px;top:440px;width:530px;height:351px;background:#f0f0f0"></div>
<div class="a" style="left:554px;top:440px;width:530px;height:30px;background:linear-gradient(90deg,#fff 0px,#e0e0e0 1px,#f2f2f2 12px,#fff 26px)"></div>
<div class="a" style="left:554px;top:470px;width:14px;height:321px;background:linear-gradient(90deg,#fff 0px,#dcdcdc 1px,#ececec 8px,#f0f0f0 14px)"></div>
<div class="t" style="left:561.5px;top:448.84px;font-size:12px;color:#9a9a9a">Cell View</div>
<div class="t" style="left:564px;top:484.69px;font-size:11px;">World Space</div>
<div class="a" style="left:633px;top:480px;width:166px;height:21px;background:#e5e5e5;border:1px solid #adadad"></div>
<div class="t" style="left:640.5px;top:485.99px;font-size:11px;">Interiors</div>
<svg class="ic" style="left:785px;top:487px" width="10" height="6" viewBox="0 0 10 6"><path d="M0.5 0.5 L5 5 L9.5 0.5" fill="none" stroke="#444" stroke-width="1.1"/></svg>
<div class="t" style="left:566.5px;top:512.29px;font-size:11px;">X</div>
<div class="a" style="left:580px;top:506px;width:36px;height:23px;background:#f0f0f0;border:1px solid #d0d0d0"></div>
<div class="t" style="left:622px;top:512.29px;font-size:11px;">Y</div>
<div class="a" style="left:634px;top:506px;width:36px;height:23px;background:#f0f0f0;border:1px solid #d0d0d0"></div>
<div class="a" style="left:677px;top:508px;width:28px;height:21px;background:#cccccc"></div>
<div class="t" style="left:684.5px;top:513.89px;font-size:11px;color:#838383">Go</div>
<div class="a" style="left:565px;top:532px;width:13px;height:13px;background:#fff;border:1px solid #333"></div>
<div class="t" style="left:581.5px;top:532.99px;font-size:11px;">Loaded at top</div>
<div class="a" style="left:564px;top:550px;width:234px;height:222px;background:#fff;border:1px solid #828790"></div>
<div class="t" style="left:573px;top:558.44px;font-size:12px;transform:scaleX(0.87);transform-origin:0 0">EditorID</div>
<div class="t" style="left:632px;top:558.44px;font-size:12px;transform:scaleX(0.87);transform-origin:0 0">Name</div>
<div class="t" style="left:688px;top:558.44px;font-size:12px;transform:scaleX(0.87);transform-origin:0 0">L.</div>
<div class="t" style="left:708px;top:558.44px;font-size:12px;transform:scaleX(0.87);transform-origin:0 0">Co...</div>
<div class="t" style="left:745px;top:558.44px;font-size:12px;transform:scaleX(0.87);transform-origin:0 0">Lo...</div>
<div class="a" style="left:622px;top:552px;width:1px;height:23px;background:#e5e5e5"></div>
<div class="a" style="left:625px;top:552px;width:1px;height:23px;background:#e5e5e5"></div>
<div class="a" style="left:681px;top:552px;width:1px;height:23px;background:#e5e5e5"></div>
<div class="a" style="left:701px;top:552px;width:1px;height:23px;background:#e5e5e5"></div>
<div class="a" style="left:738px;top:552px;width:1px;height:23px;background:#e5e5e5"></div>
<div class="a" style="left:775px;top:552px;width:1px;height:23px;background:#e5e5e5"></div>
<div class="a" style="left:565px;top:575px;width:215px;height:179px;overflow:hidden">
<div class="a" style="left:57px;top:0px;width:1px;height:200px;background:#f0f0f0"></div>
<div class="a" style="left:61px;top:0px;width:1px;height:200px;background:#f0f0f0"></div>
<div class="a" style="left:117px;top:0px;width:1px;height:200px;background:#f0f0f0"></div>
<div class="a" style="left:137px;top:0px;width:1px;height:200px;background:#f0f0f0"></div>
<div class="a" style="left:174px;top:0px;width:1px;height:200px;background:#f0f0f0"></div>
<div class="a" style="left:211px;top:0px;width:1px;height:200px;background:#f0f0f0"></div>
<div class="a" style="left:0px;top:17px;width:215px;height:1px;background:#f0f0f0"></div>
<div class="t" style="left:8px;top:3.94px;font-size:12px;transform:scaleX(0.87);transform-origin:0 0">AAADel...</div>
<div class="t" style="left:67px;top:3.94px;font-size:12px;transform:scaleX(0.87);transform-origin:0 0">TestTo...</div>
<div class="t" style="left:143px;top:3.94px;font-size:12px;transform:scaleX(0.87);transform-origin:0 0">Int...</div>
<div class="t" style="left:180px;top:3.94px;font-size:12px;transform:scaleX(0.87);transform-origin:0 0">--</div>
<div class="a" style="left:0px;top:34px;width:215px;height:1px;background:#f0f0f0"></div>
<div class="t" style="left:8px;top:20.94px;font-size:12px;transform:scaleX(0.87);transform-origin:0 0">aaaMar...</div>
<div class="t" style="left:67px;top:20.94px;font-size:12px;transform:scaleX(0.87);transform-origin:0 0">Marker...</div>
<div class="t" style="left:143px;top:20.94px;font-size:12px;transform:scaleX(0.87);transform-origin:0 0">Int...</div>
<div class="t" style="left:180px;top:20.94px;font-size:12px;transform:scaleX(0.87);transform-origin:0 0">--</div>
<div class="a" style="left:0px;top:51px;width:215px;height:1px;background:#f0f0f0"></div>
<div class="t" style="left:8px;top:37.94px;font-size:12px;transform:scaleX(0.87);transform-origin:0 0">Abando...</div>
<div class="t" style="left:67px;top:37.94px;font-size:12px;transform:scaleX(0.87);transform-origin:0 0">P&ndash;P&deg;P...</div>
<div class="t" style="left:143px;top:37.94px;font-size:12px;transform:scaleX(0.87);transform-origin:0 0">Int...</div>
<div class="t" style="left:180px;top:37.94px;font-size:12px;transform:scaleX(0.87);transform-origin:0 0">Ab...</div>
<div class="a" style="left:0px;top:68px;width:215px;height:1px;background:#f0f0f0"></div>
<div class="t" style="left:8px;top:54.94px;font-size:12px;transform:scaleX(0.87);transform-origin:0 0">Abando...</div>
<div class="t" style="left:67px;top:54.94px;font-size:12px;transform:scaleX(0.87);transform-origin:0 0">P&ndash;P&deg;P...</div>
<div class="t" style="left:143px;top:54.94px;font-size:12px;transform:scaleX(0.87);transform-origin:0 0">Int...</div>
<div class="t" style="left:180px;top:54.94px;font-size:12px;transform:scaleX(0.87);transform-origin:0 0">Ab...</div>
<div class="a" style="left:0px;top:85px;width:215px;height:1px;background:#f0f0f0"></div>
<div class="t" style="left:8px;top:71.94px;font-size:12px;transform:scaleX(0.87);transform-origin:0 0">Alftand01</div>
<div class="t" style="left:67px;top:71.94px;font-size:12px;transform:scaleX(0.87);transform-origin:0 0">P&#1106;P&raquo;C...</div>
<div class="t" style="left:143px;top:71.94px;font-size:12px;transform:scaleX(0.87);transform-origin:0 0">Int...</div>
<div class="t" style="left:180px;top:71.94px;font-size:12px;transform:scaleX(0.87);transform-origin:0 0">Alft...</div>
<div class="a" style="left:0px;top:102px;width:215px;height:1px;background:#f0f0f0"></div>
<div class="t" style="left:8px;top:88.94px;font-size:12px;transform:scaleX(0.87);transform-origin:0 0">Alftand02</div>
<div class="t" style="left:67px;top:88.94px;font-size:12px;transform:scaleX(0.87);transform-origin:0 0">P&#1106;P&raquo;C...</div>
<div class="t" style="left:143px;top:88.94px;font-size:12px;transform:scaleX(0.87);transform-origin:0 0">Int...</div>
<div class="t" style="left:180px;top:88.94px;font-size:12px;transform:scaleX(0.87);transform-origin:0 0">Alft...</div>
<div class="a" style="left:0px;top:119px;width:215px;height:1px;background:#f0f0f0"></div>
<div class="t" style="left:8px;top:105.94px;font-size:12px;transform:scaleX(0.87);transform-origin:0 0">Alftand...</div>
<div class="t" style="left:67px;top:105.94px;font-size:12px;transform:scaleX(0.87);transform-origin:0 0">P&#1106;P&raquo;C...</div>
<div class="t" style="left:143px;top:105.94px;font-size:12px;transform:scaleX(0.87);transform-origin:0 0">Int...</div>
<div class="t" style="left:180px;top:105.94px;font-size:12px;transform:scaleX(0.87);transform-origin:0 0">Alft...</div>
<div class="a" style="left:0px;top:136px;width:215px;height:1px;background:#f0f0f0"></div>
<div class="t" style="left:8px;top:122.94px;font-size:12px;transform:scaleX(0.87);transform-origin:0 0">Angarv...</div>
<div class="t" style="left:67px;top:122.94px;font-size:12px;transform:scaleX(0.87);transform-origin:0 0">P&#1106;PSP...</div>
<div class="t" style="left:143px;top:122.94px;font-size:12px;transform:scaleX(0.87);transform-origin:0 0">Int...</div>
<div class="t" style="left:180px;top:122.94px;font-size:12px;transform:scaleX(0.87);transform-origin:0 0">An...</div>
<div class="a" style="left:0px;top:153px;width:215px;height:1px;background:#f0f0f0"></div>
<div class="t" style="left:8px;top:139.94px;font-size:12px;transform:scaleX(0.87);transform-origin:0 0">Angarv...</div>
<div class="t" style="left:67px;top:139.94px;font-size:12px;transform:scaleX(0.87);transform-origin:0 0">P&#1106;PSP...</div>
<div class="t" style="left:143px;top:139.94px;font-size:12px;transform:scaleX(0.87);transform-origin:0 0">Int...</div>
<div class="t" style="left:180px;top:139.94px;font-size:12px;transform:scaleX(0.87);transform-origin:0 0">An...</div>
<div class="a" style="left:0px;top:170px;width:215px;height:1px;background:#f0f0f0"></div>
<div class="t" style="left:8px;top:156.94px;font-size:12px;transform:scaleX(0.87);transform-origin:0 0">Angarv...</div>
<div class="t" style="left:67px;top:156.94px;font-size:12px;transform:scaleX(0.87);transform-origin:0 0">P&#1106;PSP...</div>
<div class="t" style="left:143px;top:156.94px;font-size:12px;transform:scaleX(0.87);transform-origin:0 0">Int...</div>
<div class="t" style="left:180px;top:156.94px;font-size:12px;transform:scaleX(0.87);transform-origin:0 0">An...</div>
<div class="a" style="left:0px;top:187px;width:215px;height:1px;background:#f0f0f0"></div>
<div class="t" style="left:8px;top:173.94px;font-size:12px;transform:scaleX(0.87);transform-origin:0 0">Angarv...</div>
<div class="t" style="left:67px;top:173.94px;font-size:12px;transform:scaleX(0.87);transform-origin:0 0">P&#1106;P&raquo;P...</div>
<div class="t" style="left:143px;top:173.94px;font-size:12px;transform:scaleX(0.87);transform-origin:0 0">Int...</div>
<div class="t" style="left:180px;top:173.94px;font-size:12px;transform:scaleX(0.87);transform-origin:0 0">An...</div>
</div>
<div class="a" style="left:780px;top:551px;width:16px;height:203px;background:#f0f0f0"></div>
<div class="a" style="left:780px;top:569px;width:16px;height:17px;background:#cdcdcd"></div>
<svg class="ic" style="left:784px;top:557px" width="8" height="8"><use href="#chevU"/></svg>
<svg class="ic" style="left:784px;top:741px" width="8" height="8"><use href="#chevD"/></svg>
<div class="a" style="left:565px;top:754px;width:232px;height:17px;background:#f0f0f0"></div>
<div class="a" style="left:583px;top:754px;width:131px;height:15px;background:#cdcdcd"></div>
<svg class="ic" style="left:570px;top:758px" width="8" height="8"><use href="#chevL"/></svg>
<svg class="ic" style="left:766px;top:758px" width="8" height="8"><use href="#chevR"/></svg>
<div class="t" style="left:819px;width:250px;text-align:center;top:478.49px;font-size:11px">No Cell Selected</div>
<div class="a" style="left:816px;top:493px;width:250px;height:20px;background:#fff;border:1px solid #7a7a7a"></div>
<div class="a" style="left:813px;top:550px;width:253px;height:222px;background:#fff;border:1px solid #828790"></div>
<div class="t" style="left:821px;top:558.44px;font-size:12px;transform:scaleX(0.87);transform-origin:0 0">Editor ID</div>
<div class="t" style="left:903px;top:558.44px;font-size:12px;transform:scaleX(0.87);transform-origin:0 0">T...</div>
<div class="t" style="left:929px;top:558.44px;font-size:12px;transform:scaleX(0.87);transform-origin:0 0">&#1021;...</div>
<div class="t" style="left:956px;top:558.44px;font-size:12px;transform:scaleX(0.87);transform-origin:0 0">Loc...</div>
<div class="t" style="left:995px;top:558.44px;font-size:12px;transform:scaleX(0.87);transform-origin:0 0">L...</div>
<div class="t" style="left:1020px;top:558.44px;font-size:12px;transform:scaleX(0.87);transform-origin:0 0">P...</div>
<div class="t" style="left:1048px;top:558.44px;font-size:12px;transform:scaleX(0.87);transform-origin:0 0">I...</div>
<div class="a" style="left:892px;top:552px;width:1px;height:23px;background:#e5e5e5"></div>
<div class="a" style="left:896px;top:552px;width:1px;height:23px;background:#e5e5e5"></div>
<div class="a" style="left:922px;top:552px;width:1px;height:23px;background:#e5e5e5"></div>
<div class="a" style="left:948px;top:552px;width:1px;height:23px;background:#e5e5e5"></div>
<div class="a" style="left:989px;top:552px;width:1px;height:23px;background:#e5e5e5"></div>
<div class="a" style="left:1015px;top:552px;width:1px;height:23px;background:#e5e5e5"></div>
<div class="a" style="left:1041px;top:552px;width:1px;height:23px;background:#e5e5e5"></div>
<div class="a" style="left:893px;top:575px;width:1px;height:179px;background:#f0f0f0"></div>
<div class="a" style="left:897px;top:575px;width:1px;height:179px;background:#f0f0f0"></div>
<div class="a" style="left:923px;top:575px;width:1px;height:179px;background:#f0f0f0"></div>
<div class="a" style="left:949px;top:575px;width:1px;height:179px;background:#f0f0f0"></div>
<div class="a" style="left:989px;top:575px;width:1px;height:179px;background:#f0f0f0"></div>
<div class="a" style="left:1015px;top:575px;width:1px;height:179px;background:#f0f0f0"></div>
<div class="a" style="left:1041px;top:575px;width:1px;height:179px;background:#f0f0f0"></div>
<div class="a" style="left:814px;top:592px;width:251px;height:1px;background:#f0f0f0"></div>
<div class="a" style="left:814px;top:609px;width:251px;height:1px;background:#f0f0f0"></div>
<div class="a" style="left:814px;top:626px;width:251px;height:1px;background:#f0f0f0"></div>
<div class="a" style="left:814px;top:643px;width:251px;height:1px;background:#f0f0f0"></div>
<div class="a" style="left:814px;top:660px;width:251px;height:1px;background:#f0f0f0"></div>
<div class="a" style="left:814px;top:677px;width:251px;height:1px;background:#f0f0f0"></div>
<div class="a" style="left:814px;top:694px;width:251px;height:1px;background:#f0f0f0"></div>
<div class="a" style="left:814px;top:711px;width:251px;height:1px;background:#f0f0f0"></div>
<div class="a" style="left:814px;top:728px;width:251px;height:1px;background:#f0f0f0"></div>
<div class="a" style="left:814px;top:745px;width:251px;height:1px;background:#f0f0f0"></div>
<div class="a" style="left:814px;top:754px;width:251px;height:17px;background:#f0f0f0"></div>
<div class="a" style="left:832px;top:754px;width:193px;height:15px;background:#cdcdcd"></div>
<svg class="ic" style="left:819px;top:758px" width="8" height="8"><use href="#chevL"/></svg>
<svg class="ic" style="left:1051px;top:758px" width="8" height="8"><use href="#chevR"/></svg>
<svg class="ic" style="left:10px;top:53px" width="15" height="14" viewBox="0 0 15 14" ><path d="M0.5 2.5 L4.5 2.5 L5.5 4.5 L10.5 4.5 L10.5 13.5 L0.5 13.5 Z" fill="#ffff60" stroke="#000"/><path d="M1.5 13.5 L5.5 7.5 L14.5 7.5 L10.5 13.5 Z" fill="#808000" stroke="#000"/><path d="M9.5 2.5 Q11.5 -0.5 13.5 3.5" stroke="#000" fill="none"/></svg>
<svg class="ic" style="left:33px;top:53px" width="14" height="14" viewBox="0 0 14 14" shape-rendering="crispEdges"><rect x="0.5" y="0.5" width="13" height="13" fill="#808000" stroke="#000"/><rect x="3" y="1" width="8" height="5" fill="#eee"/><rect x="3" y="8" width="9" height="6" fill="#000"/><rect x="8" y="10" width="2" height="3" fill="#eee"/></svg>
<svg class="ic" style="left:54px;top:50px" width="17" height="17" viewBox="0 0 17 17" ><rect x="0.5" y="7.5" width="9" height="9" fill="#ff0000" stroke="#000"/><rect x="3" y="8" width="4" height="3" fill="#000"/><rect x="4" y="9" width="2" height="1" fill="#ddd"/><rect x="3" y="12" width="5" height="5" fill="#000"/><rect x="5" y="13" width="1.5" height="2" fill="#ddd"/><path d="M8.5 9.5 L11.5 4.5 L15.5 9.5 L13.5 9.5 L13 12 L9.5 15.5 L11 11 L8.5 11 Z" fill="#ffff00" stroke="#ff0000" stroke-width="0.9"/><text x="2.5" y="6" font-family="Liberation Sans" font-size="6.5" font-weight="bold" fill="#000" letter-spacing="0.6">PC</text></svg>
<svg class="ic" style="left:77px;top:51px" width="16" height="16" viewBox="0 0 16 16" shape-rendering="crispEdges"><rect x="8" y="2" width="6" height="1" fill="#000"/><rect x="15" y="2" width="1" height="1" fill="#0000a0"/><rect x="7" y="3" width="1" height="1" fill="#000"/><rect x="8" y="3" width="6" height="1" fill="#fff"/><rect x="14" y="3" width="1" height="1" fill="#000"/><rect x="15" y="3" width="1" height="1" fill="#0000a0"/><rect x="1" y="4" width="6" height="1" fill="#000"/><rect x="7" y="4" width="1" height="1" fill="#fff"/><rect x="8" y="4" width="1" height="1" fill="#000"/><rect x="9" y="4" width="6" height="1" fill="#fff"/><rect x="15" y="4" width="1" height="1" fill="#0000a0"/><rect x="1" y="5" width="1" height="1" fill="#000"/><rect x="2" y="5" width="3" height="1" fill="#fff"/><rect x="5" y="5" width="1" height="1" fill="#000"/><rect x="6" y="5" width="1" height="1" fill="#fff"/><rect x="7" y="5" width="1" height="1" fill="#000"/><rect x="8" y="5" width="1" height="1" fill="#fff"/><rect x="9" y="5" width="1" height="1" fill="#000"/><rect x="10" y="5" width="5" height="1" fill="#fff"/><rect x="15" y="5" width="1" height="1" fill="#0000a0"/><rect x="1" y="6" width="1" height="1" fill="#000"/><rect x="2" y="6" width="4" height="1" fill="#fff"/><rect x="6" y="6" width="1" height="1" fill="#000"/><rect x="7" y="6" width="1" height="1" fill="#fff"/><rect x="8" y="6" width="1" height="1" fill="#000"/><rect x="9" y="6" width="1" height="1" fill="#fff"/><rect x="10" y="6" width="5" height="1" fill="#000"/><rect x="15" y="6" width="1" height="1" fill="#0000a0"/><rect x="1" y="7" width="1" height="1" fill="#000"/><rect x="2" y="7" width="1" height="1" fill="#fff"/><rect x="3" y="7" width="1" height="1" fill="#000"/><rect x="4" y="7" width="1" height="1" fill="#fff"/><rect x="5" y="7" width="1" height="1" fill="#000"/><rect x="6" y="7" width="1" height="1" fill="#fff"/><rect x="7" y="7" width="1" height="1" fill="#000"/><rect x="8" y="7" width="1" height="1" fill="#fff"/><rect x="9" y="7" width="1" height="1" fill="#000"/><rect x="10" y="7" width="2" height="1" fill="#fff"/><rect x="12" y="7" width="1" height="1" fill="#000"/><rect x="1" y="8" width="1" height="1" fill="#000"/><rect x="2" y="8" width="2" height="1" fill="#fff"/><rect x="4" y="8" width="1" height="1" fill="#000"/><rect x="5" y="8" width="3" height="1" fill="#fff"/><rect x="8" y="8" width="1" height="1" fill="#000"/><rect x="9" y="8" width="1" height="1" fill="#fff"/><rect x="10" y="8" width="1" height="1" fill="#000"/><rect x="11" y="8" width="1" height="1" fill="#fff"/><rect x="12" y="8" width="1" height="1" fill="#000"/><rect x="1" y="9" width="1" height="1" fill="#000"/><rect x="2" y="9" width="7" height="1" fill="#fff"/><rect x="9" y="9" width="1" height="1" fill="#000"/><rect x="10" y="9" width="2" height="1" fill="#fff"/><rect x="12" y="9" width="1" height="1" fill="#000"/><rect x="1" y="10" width="1" height="1" fill="#000"/><rect x="2" y="10" width="10" height="1" fill="#fff"/><rect x="12" y="10" width="1" height="1" fill="#000"/><rect x="1" y="11" width="1" height="1" fill="#000"/><rect x="2" y="11" width="1" height="1" fill="#fff"/><rect x="3" y="11" width="2" height="1" fill="#000"/><rect x="5" y="11" width="1" height="1" fill="#fff"/><rect x="6" y="11" width="5" height="1" fill="#000"/><rect x="11" y="11" width="1" height="1" fill="#fff"/><rect x="12" y="11" width="1" height="1" fill="#000"/><rect x="1" y="12" width="1" height="1" fill="#000"/><rect x="2" y="12" width="10" height="1" fill="#fff"/><rect x="12" y="12" width="1" height="1" fill="#000"/><rect x="1" y="13" width="1" height="1" fill="#000"/><rect x="2" y="13" width="1" height="1" fill="#fff"/><rect x="3" y="13" width="2" height="1" fill="#000"/><rect x="5" y="13" width="1" height="1" fill="#fff"/><rect x="6" y="13" width="5" height="1" fill="#000"/><rect x="11" y="13" width="1" height="1" fill="#fff"/><rect x="12" y="13" width="1" height="1" fill="#000"/><rect x="1" y="14" width="1" height="1" fill="#000"/><rect x="2" y="14" width="10" height="1" fill="#fff"/><rect x="12" y="14" width="1" height="1" fill="#000"/><rect x="1" y="15" width="12" height="1" fill="#000"/></svg>
<svg class="ic" style="left:108px;top:52px" width="17" height="14" viewBox="0 0 17 14" shape-rendering="crispEdges"><rect x="8" y="2" width="3" height="1" fill="#000"/><rect x="6" y="3" width="2" height="1" fill="#000"/><rect x="11" y="3" width="2" height="1" fill="#000"/><rect x="2" y="4" width="2" height="1" fill="#000"/><rect x="5" y="4" width="1" height="1" fill="#000"/><rect x="13" y="4" width="1" height="1" fill="#000"/><rect x="2" y="5" width="4" height="1" fill="#000"/><rect x="14" y="5" width="1" height="1" fill="#000"/><rect x="2" y="6" width="4" height="1" fill="#000"/><rect x="14" y="6" width="1" height="1" fill="#000"/><rect x="2" y="7" width="5" height="1" fill="#000"/><rect x="14" y="7" width="1" height="1" fill="#000"/><rect x="14" y="8" width="1" height="1" fill="#000"/><rect x="13" y="9" width="1" height="1" fill="#000"/><rect x="11" y="10" width="2" height="1" fill="#000"/><rect x="1" y="12" width="9" height="1" fill="#000"/><rect x="11" y="12" width="1" height="1" fill="#000"/><rect x="13" y="12" width="1" height="1" fill="#000"/><rect x="15" y="12" width="1" height="1" fill="#000"/><rect x="1" y="13" width="9" height="1" fill="#000"/><rect x="11" y="13" width="1" height="1" fill="#000"/><rect x="13" y="13" width="1" height="1" fill="#000"/><rect x="15" y="13" width="1" height="1" fill="#000"/></svg>
<svg class="ic" style="left:131px;top:52px" width="17" height="14" viewBox="0 0 17 14" shape-rendering="crispEdges"><rect x="6" y="2" width="3" height="1" fill="#000"/><rect x="4" y="3" width="2" height="1" fill="#000"/><rect x="9" y="3" width="2" height="1" fill="#000"/><rect x="3" y="4" width="1" height="1" fill="#000"/><rect x="11" y="4" width="1" height="1" fill="#000"/><rect x="13" y="4" width="2" height="1" fill="#000"/><rect x="2" y="5" width="1" height="1" fill="#000"/><rect x="11" y="5" width="4" height="1" fill="#000"/><rect x="2" y="6" width="1" height="1" fill="#000"/><rect x="11" y="6" width="4" height="1" fill="#000"/><rect x="2" y="7" width="1" height="1" fill="#000"/><rect x="10" y="7" width="5" height="1" fill="#000"/><rect x="2" y="8" width="1" height="1" fill="#000"/><rect x="3" y="9" width="1" height="1" fill="#000"/><rect x="4" y="10" width="2" height="1" fill="#000"/><rect x="1" y="12" width="1" height="1" fill="#000"/><rect x="3" y="12" width="1" height="1" fill="#000"/><rect x="5" y="12" width="1" height="1" fill="#000"/><rect x="7" y="12" width="9" height="1" fill="#000"/><rect x="1" y="13" width="1" height="1" fill="#000"/><rect x="3" y="13" width="1" height="1" fill="#000"/><rect x="5" y="13" width="1" height="1" fill="#000"/><rect x="7" y="13" width="9" height="1" fill="#000"/></svg>
<svg class="ic" style="left:161px;top:52px" width="17" height="15" viewBox="0 0 17 15" shape-rendering="crispEdges"><rect x="2" y="0" width="1" height="1" fill="#000"/><rect x="6" y="0" width="1" height="1" fill="#000"/><rect x="10" y="0" width="1" height="1" fill="#000"/><rect x="14" y="0" width="1" height="1" fill="#000"/><rect x="2" y="1" width="15" height="1" fill="#000"/><rect x="2" y="2" width="1" height="1" fill="#000"/><rect x="3" y="2" width="3" height="1" fill="#fff"/><rect x="6" y="2" width="1" height="1" fill="#000"/><rect x="7" y="2" width="2" height="1" fill="#ff0000"/><rect x="9" y="2" width="2" height="1" fill="#000"/><rect x="11" y="2" width="3" height="1" fill="#fff"/><rect x="14" y="2" width="1" height="1" fill="#000"/><rect x="2" y="3" width="1" height="1" fill="#000"/><rect x="3" y="3" width="2" height="1" fill="#fff"/><rect x="5" y="3" width="8" height="1" fill="#ff0000"/><rect x="13" y="3" width="1" height="1" fill="#fff"/><rect x="14" y="3" width="1" height="1" fill="#000"/><rect x="2" y="4" width="1" height="1" fill="#000"/><rect x="3" y="4" width="1" height="1" fill="#fff"/><rect x="4" y="4" width="10" height="1" fill="#ff0000"/><rect x="14" y="4" width="1" height="1" fill="#000"/><rect x="2" y="5" width="2" height="1" fill="#000"/><rect x="4" y="5" width="10" height="1" fill="#ff0000"/><rect x="14" y="5" width="3" height="1" fill="#000"/><rect x="2" y="6" width="1" height="1" fill="#000"/><rect x="3" y="6" width="12" height="1" fill="#ff0000"/><rect x="2" y="7" width="1" height="1" fill="#000"/><rect x="3" y="7" width="12" height="1" fill="#ff0000"/><rect x="2" y="8" width="1" height="1" fill="#000"/><rect x="3" y="8" width="12" height="1" fill="#ff0000"/><rect x="2" y="9" width="2" height="1" fill="#000"/><rect x="4" y="9" width="10" height="1" fill="#ff0000"/><rect x="14" y="9" width="3" height="1" fill="#000"/><rect x="2" y="10" width="1" height="1" fill="#000"/><rect x="3" y="10" width="1" height="1" fill="#fff"/><rect x="4" y="10" width="10" height="1" fill="#ff0000"/><rect x="14" y="10" width="1" height="1" fill="#000"/><rect x="2" y="11" width="1" height="1" fill="#000"/><rect x="3" y="11" width="2" height="1" fill="#fff"/><rect x="5" y="11" width="8" height="1" fill="#ff0000"/><rect x="13" y="11" width="1" height="1" fill="#fff"/><rect x="14" y="11" width="1" height="1" fill="#000"/><rect x="2" y="12" width="1" height="1" fill="#000"/><rect x="3" y="12" width="3" height="1" fill="#fff"/><rect x="6" y="12" width="1" height="1" fill="#000"/><rect x="7" y="12" width="2" height="1" fill="#ff0000"/><rect x="9" y="12" width="1" height="1" fill="#000"/><rect x="10" y="12" width="4" height="1" fill="#fff"/><rect x="14" y="12" width="1" height="1" fill="#000"/><rect x="2" y="13" width="15" height="1" fill="#000"/><rect x="2" y="14" width="1" height="1" fill="#000"/><rect x="6" y="14" width="1" height="1" fill="#000"/><rect x="10" y="14" width="1" height="1" fill="#000"/><rect x="14" y="14" width="1" height="1" fill="#000"/></svg>
<div class="a" style="left:182px;top:48px;width:23px;height:21px;background:#c4dcf0;border:1px solid #99ccf5"></div>
<svg class="ic" style="left:186px;top:52px" width="16" height="15" viewBox="0 0 16 15" ><path d="M1.5 13.5 L10 6 L12 8.5 L13 10.5 L13 13.5 Z" fill="#ff0000"/><path d="M1 14 L14.5 0.8" stroke="#000" stroke-width="1.4"/><path d="M1 14 L16 14" stroke="#000" stroke-width="1.2"/><path d="M10 6.5 L12 8.5 L13 10.5 L13 14" stroke="#000" fill="none"/></svg>
<svg class="ic" style="left:205px;top:50px" width="20" height="17" viewBox="0 0 20 17" ><circle cx="10.5" cy="9" r="5.3" fill="#ff0000"/><text x="3" y="8" font-family="Liberation Sans" font-size="7" font-weight="bold" textLength="15" lengthAdjust="spacingAndGlyphs">Local</text><text x="3" y="15" font-family="Liberation Sans" font-size="7" font-weight="bold" textLength="16" lengthAdjust="spacingAndGlyphs">Trans</text></svg>
<svg class="ic" style="left:239px;top:50px" width="17" height="17" viewBox="0 0 17 17" ><circle cx="8.5" cy="8.5" r="7.3" fill="#1a7fe8"/><path d="M5 3 L11 3 L10 5 L7 5 L6 7 L4 6 Z M2.5 9 L6 8 L8 9 L9 11 L6 13 L9 14 L11 12 L10 9 L12 8 L14 10 L13 13 L9 15.5 L7 15.5 L5 12 L2.5 11 Z M10 6 L13 6 L14 8 L11 8 Z" fill="#00ff00"/><path d="M6 2 L11 2 L11 2.8 L6 2.8 Z M7 14.5 L10 14.5 L10 15.5 L7 15.5 Z M11 6 L12 6 L12 8.5 L11 8.5 Z" fill="#007000"/><circle cx="6" cy="9.5" r="0.6" fill="#004000"/></svg>
<svg class="ic" style="left:263px;top:52px" width="15" height="15" viewBox="0 0 15 15" shape-rendering="crispEdges"><rect x="0" y="0" width="15" height="15" fill="#00ffff"/><path d="M0 3 L2 3 L3 4 L5 4.5 L1 5 L0 4 Z M12 2 L15 1 L15 3 L12 3 Z" fill="#fff"/><path d="M0 10 L3 8 L5 7 L7 7.5 L9 10 L11 9 L13 6 L15 5 L15 15 L0 15 Z" fill="#007a00"/><g fill="#00ff00"><rect x="2" y="9" width="1" height="1"/><rect x="3" y="10" width="1" height="1"/><rect x="1" y="11" width="1" height="1"/><rect x="4" y="12" width="1" height="1"/><rect x="2" y="13" width="1" height="1"/><rect x="6" y="12" width="1" height="1"/><rect x="5" y="9" width="1" height="1"/><rect x="11" y="10" width="1" height="1"/><rect x="12" y="8" width="1" height="1"/><rect x="13" y="11" width="1" height="1"/><rect x="10" y="12" width="1" height="1"/><rect x="3" y="14" width="1" height="1"/></g></svg>
<svg class="ic" style="left:285px;top:50px" width="17" height="17" viewBox="0 0 17 17" ><path d="M1.5 1 L1.5 15" stroke="#000" stroke-dasharray="1 1"/><path d="M0 13 L1.5 16 L3 13" stroke="#000" stroke-width="0.9" fill="none"/><path d="M3.5 10.5 L4.5 8.5 M5.5 7 L6.5 6 M8 5 L9 4.5 M10.5 4 L11 3.8" stroke="#000" stroke-width="1"/><circle cx="13.5" cy="4.5" r="2.5" fill="#ff0000"/><path d="M14.5 6.8 L16 5" stroke="#900"/><text x="6" y="16.2" font-family="Liberation Sans" font-size="7.2" font-weight="bold" fill="#000" >HK</text></svg>
<svg class="ic" style="left:307px;top:50px" width="18" height="18" viewBox="0 0 18 18" ><path d="M1 2 L4.5 2 L8 5.5 L8 13 L3.5 13 L3.5 7 L1 5.5 Z" fill="#0a6ee0"/><path d="M1 14.5 L17 14.5 L17 17 L1 17 Z" fill="#0a6ee0"/><path d="M3 14 L6 13.5 L8 14 L11 13.5 L13 14.5" stroke="#fff" fill="none"/><path d="M9.5 1 L9.5 7 M9 1.5 L14 1.5 M9 4.5 L13 4.5" stroke="#000" stroke-width="1.1"/><path d="M12 6.5 L17 13 M17 6.5 L12 13" stroke="#000" stroke-width="1.1"/></svg>
<div class="a" style="left:336px;top:48px;width:23px;height:21px;background:#c4dcf0;border:1px solid #99ccf5"></div>
<svg class="ic" style="left:339px;top:50px" width="18" height="17" viewBox="0 0 18 17" shape-rendering="crispEdges"><rect x="4" y="1" width="1" height="1" fill="#ffff00"/><rect x="8" y="1" width="5" height="1" fill="#000"/><rect x="16" y="1" width="1" height="1" fill="#ffff00"/><rect x="5" y="2" width="1" height="1" fill="#ffff00"/><rect x="7" y="2" width="1" height="1" fill="#000"/><rect x="8" y="2" width="5" height="1" fill="#fff"/><rect x="13" y="2" width="1" height="1" fill="#000"/><rect x="15" y="2" width="1" height="1" fill="#ffff00"/><rect x="2" y="3" width="1" height="1" fill="#ffff00"/><rect x="6" y="3" width="1" height="1" fill="#000"/><rect x="7" y="3" width="7" height="1" fill="#fff"/><rect x="14" y="3" width="1" height="1" fill="#000"/><rect x="3" y="4" width="1" height="1" fill="#ffff00"/><rect x="5" y="4" width="1" height="1" fill="#000"/><rect x="6" y="4" width="2" height="1" fill="#fff"/><rect x="8" y="4" width="1" height="1" fill="#000"/><rect x="9" y="4" width="1" height="1" fill="#fff"/><rect x="10" y="4" width="1" height="1" fill="#000"/><rect x="11" y="4" width="1" height="1" fill="#fff"/><rect x="12" y="4" width="1" height="1" fill="#000"/><rect x="13" y="4" width="2" height="1" fill="#fff"/><rect x="15" y="4" width="1" height="1" fill="#000"/><rect x="16" y="4" width="1" height="1" fill="#ffff00"/><rect x="5" y="5" width="1" height="1" fill="#000"/><rect x="6" y="5" width="1" height="1" fill="#fff"/><rect x="7" y="5" width="1" height="1" fill="#000"/><rect x="8" y="5" width="1" height="1" fill="#fff"/><rect x="9" y="5" width="1" height="1" fill="#000"/><rect x="10" y="5" width="1" height="1" fill="#fff"/><rect x="11" y="5" width="1" height="1" fill="#000"/><rect x="12" y="5" width="1" height="1" fill="#fff"/><rect x="13" y="5" width="1" height="1" fill="#000"/><rect x="14" y="5" width="1" height="1" fill="#fff"/><rect x="15" y="5" width="1" height="1" fill="#000"/><rect x="5" y="6" width="1" height="1" fill="#000"/><rect x="6" y="6" width="1" height="1" fill="#fff"/><rect x="7" y="6" width="1" height="1" fill="#000"/><rect x="8" y="6" width="5" height="1" fill="#fff"/><rect x="13" y="6" width="1" height="1" fill="#000"/><rect x="14" y="6" width="1" height="1" fill="#fff"/><rect x="15" y="6" width="1" height="1" fill="#000"/><rect x="5" y="7" width="1" height="1" fill="#000"/><rect x="6" y="7" width="2" height="1" fill="#fff"/><rect x="8" y="7" width="1" height="1" fill="#000"/><rect x="9" y="7" width="3" height="1" fill="#fff"/><rect x="12" y="7" width="1" height="1" fill="#000"/><rect x="13" y="7" width="2" height="1" fill="#fff"/><rect x="15" y="7" width="1" height="1" fill="#000"/><rect x="2" y="8" width="2" height="1" fill="#ffff00"/><rect x="5" y="8" width="1" height="1" fill="#000"/><rect x="6" y="8" width="3" height="1" fill="#fff"/><rect x="9" y="8" width="1" height="1" fill="#000"/><rect x="10" y="8" width="1" height="1" fill="#fff"/><rect x="11" y="8" width="1" height="1" fill="#000"/><rect x="12" y="8" width="3" height="1" fill="#fff"/><rect x="15" y="8" width="1" height="1" fill="#000"/><rect x="16" y="8" width="1" height="1" fill="#ffff00"/><rect x="2" y="9" width="2" height="1" fill="#ffff00"/><rect x="5" y="9" width="1" height="1" fill="#000"/><rect x="6" y="9" width="3" height="1" fill="#fff"/><rect x="9" y="9" width="1" height="1" fill="#000"/><rect x="10" y="9" width="1" height="1" fill="#fff"/><rect x="11" y="9" width="1" height="1" fill="#000"/><rect x="12" y="9" width="3" height="1" fill="#fff"/><rect x="15" y="9" width="1" height="1" fill="#000"/><rect x="16" y="9" width="1" height="1" fill="#ffff00"/><rect x="6" y="10" width="1" height="1" fill="#000"/><rect x="7" y="10" width="2" height="1" fill="#fff"/><rect x="9" y="10" width="1" height="1" fill="#000"/><rect x="10" y="10" width="1" height="1" fill="#fff"/><rect x="11" y="10" width="1" height="1" fill="#000"/><rect x="12" y="10" width="2" height="1" fill="#fff"/><rect x="14" y="10" width="1" height="1" fill="#000"/><rect x="7" y="11" width="1" height="1" fill="#000"/><rect x="8" y="11" width="1" height="1" fill="#fff"/><rect x="9" y="11" width="3" height="1" fill="#000"/><rect x="12" y="11" width="1" height="1" fill="#fff"/><rect x="13" y="11" width="1" height="1" fill="#000"/><rect x="5" y="12" width="1" height="1" fill="#ffff00"/><rect x="8" y="12" width="1" height="1" fill="#ffff00"/><rect x="9" y="12" width="3" height="1" fill="#000"/><rect x="12" y="12" width="1" height="1" fill="#ffff00"/><rect x="15" y="12" width="1" height="1" fill="#ffff00"/><rect x="3" y="13" width="2" height="1" fill="#ffff00"/><rect x="8" y="13" width="1" height="1" fill="#000"/><rect x="9" y="13" width="3" height="1" fill="#ffff00"/><rect x="12" y="13" width="1" height="1" fill="#000"/><rect x="16" y="13" width="1" height="1" fill="#ffff00"/><rect x="2" y="14" width="1" height="1" fill="#ffff00"/><rect x="8" y="14" width="1" height="1" fill="#ffff00"/><rect x="9" y="14" width="3" height="1" fill="#000"/><rect x="12" y="14" width="1" height="1" fill="#ffff00"/><rect x="8" y="15" width="1" height="1" fill="#000"/><rect x="9" y="15" width="3" height="1" fill="#ffff00"/><rect x="12" y="15" width="1" height="1" fill="#000"/><rect x="9" y="16" width="3" height="1" fill="#000"/></svg>
<svg class="ic" style="left:362px;top:51px" width="17" height="17" viewBox="0 0 17 17" ><path d="M2 8 L1 5 L3 3 L5 2 L7 1 L9 0.5 L13 0.5 L15.5 2 L15.5 9 L2.5 9 Z" fill="#fff"/><path d="M2.5 9 Q0.5 8 1 5 Q2 2.5 4 2.5" stroke="#a0a0a0" fill="none" stroke-width="1"/><path d="M3 7 L4.5 5.5 M6.5 3 L8 2 M11.5 1 L12 0 M13.5 5 L14.5 4 M9 8 L11 9.5" stroke="#a0a0a0" stroke-width="0.9"/><path d="M5 10.5 L1.5 10.5 L1 12.5 L4 13 L4.5 15.5 L1 16" stroke="#000" stroke-width="1.3" fill="none"/><path d="M7 10 L7 16.5 M10.5 10.5 L7.5 13 L10.5 16.5" stroke="#000" stroke-width="1.3" fill="none"/><path d="M11.5 10.5 L13.5 13 L15.5 10.5 M13.5 13 L13.5 16.5" stroke="#000" stroke-width="1.3" fill="none"/></svg>
<svg class="ic" style="left:385px;top:51px" width="16" height="17" viewBox="0 0 16 17" ><path d="M1.5 4 L3 7 L1.5 10 L3 13 L1.5 15 M4 6 L5 9 L4.5 12 L6 14 M7 4 L6.5 7 L8 10 L7 13 M10 4 L9.5 8 L11 11 L10 14 M14 5 L13 8 L14 11 L13 14" stroke="#007000" stroke-width="1.3" fill="none"/><path d="M3 5 L4 8 L3 11 M5.5 7 L6.5 10 L5.5 13 M8.5 5 L9 8 L8.5 12 M12 6 L11.5 9 L12.5 12 M14.5 4 L15 7 L14.5 10" stroke="#00ff00" stroke-width="1.2" fill="none"/><path d="M0 14.5 L9 12 L16 12 L16 16 L0 16 Z" fill="#808000"/></svg>
<svg class="ic" style="left:416px;top:53px" width="17" height="14" viewBox="0 0 17 14" ><path d="M8 0.8 Q15.5 0.8 15.5 5 Q15.5 9.2 8.5 9.2 L5 12.5 L6 9 Q0.8 8.5 0.8 5 Q0.8 0.8 8 0.8 Z" fill="#fff" stroke="#000" stroke-width="1"/></svg>
<svg class="ic" style="left:450px;top:52px" width="14" height="15" viewBox="0 0 14 15" ><path d="M1 1 L1 14 L13 14 L6 6 L1 7 M1 7 L6 1 L12 7 M6 1 L6 6" stroke="#b00000" fill="none" stroke-width="0.9"/><g fill="#ff0000"><circle cx="1" cy="1.5" r="1.2"/><circle cx="6" cy="1" r="1.2"/><circle cx="1" cy="7" r="1.3"/><circle cx="6" cy="6" r="1.2"/><circle cx="1" cy="14" r="1.2"/><circle cx="13" cy="14" r="1.2"/></g></svg>
<svg class="ic" style="left:479px;top:52px" width="15" height="14" viewBox="0 0 15 14" ><path d="M0.5 4.5 L4.5 0.5 L14.5 0.5 L10.5 4.5 Z" fill="#fff" stroke="#000"/><path d="M10.5 4.5 L14.5 0.5 L14.5 9.5 L10.5 13.5 Z" fill="#a8a8a8" stroke="#000"/><rect x="0.5" y="4.5" width="10" height="9" fill="#fff" stroke="#000" stroke-width="1.2"/><path d="M2.5 7.5 L8.5 7.5 M5.5 7.5 L5.5 12" stroke="#000" stroke-width="2"/></svg>
<svg class="ic" style="left:502px;top:52px" width="15" height="14" viewBox="0 0 15 14" ><path d="M0.5 4.5 L4.5 0.5 L14.5 0.5 L10.5 4.5 Z" fill="#fff" stroke="#000"/><path d="M10.5 4.5 L14.5 0.5 L14.5 9.5 L10.5 13.5 Z" fill="#a8a8a8" stroke="#000"/><rect x="0.5" y="4.5" width="10" height="9" fill="#fff" stroke="#000" stroke-width="1.2"/><path d="M3 12 L3 7 L5.5 9.5 L8 7 L8 12" stroke="#000" stroke-width="1.1" fill="none"/></svg>
<svg class="ic" style="left:525px;top:52px" width="14" height="14" viewBox="0 0 14 14" ><circle cx="7" cy="7" r="6" fill="#fff" stroke="#000" stroke-width="2"/><path d="M4 10 L4 4.5 L7 7.5 L10 4.5 L10 10" stroke="#000" stroke-width="1.2" fill="none"/></svg>
<svg class="ic" style="left:548px;top:52px" width="14" height="14" viewBox="0 0 14 14" ><rect x="0.6" y="0.6" width="12.8" height="12.8" fill="#f4f4f4" stroke="#000" stroke-width="1.2"/><ellipse cx="7" cy="7" rx="2.7" ry="4.5" fill="none" stroke="#000" stroke-width="2"/></svg>
<svg class="ic" style="left:571px;top:52px" width="15" height="14" viewBox="0 0 15 14" ><path d="M0.5 4.5 L4.5 0.5 L14.5 0.5 L10.5 4.5 Z" fill="#fff" stroke="#000"/><path d="M10.5 4.5 L14.5 0.5 L14.5 9.5 L10.5 13.5 Z" fill="#a8a8a8" stroke="#000"/><rect x="0.5" y="4.5" width="10" height="9" fill="#fff" stroke="#000" stroke-width="1.2"/><rect x="3.5" y="6.5" width="4" height="5" rx="1" fill="none" stroke="#000" stroke-width="1.1"/></svg>
<svg class="ic" style="left:594px;top:52px" width="14" height="14" viewBox="0 0 14 14" ><rect x="0.5" y="0.5" width="5" height="13" fill="#f4f4f4" stroke="#000"/><rect x="8.5" y="1.5" width="5" height="12" fill="#f4f4f4" stroke="#000"/><path d="M3 7.5 L12 7.5" stroke="#ff0000" stroke-width="1.5"/></svg>
<svg class="ic" style="left:617px;top:52px" width="15" height="14" viewBox="0 0 15 14" ><path d="M0.5 4.5 L4.5 0.5 L14.5 0.5 L10.5 4.5 Z" fill="#fff" stroke="#000"/><path d="M10.5 4.5 L14.5 0.5 L14.5 9.5 L10.5 13.5 Z" fill="#a8a8a8" stroke="#000"/><rect x="0.5" y="4.5" width="10" height="9" fill="#fff" stroke="#000" stroke-width="1.2"/></svg>
<svg class="ic" style="left:640px;top:52px" width="14" height="14" viewBox="0 0 14 14" ><rect x="0.6" y="0.6" width="12.8" height="12.8" fill="#f4f4f4" stroke="#000" stroke-width="1.2"/><rect x="4.5" y="4.5" width="5" height="4" fill="none" stroke="#000"/></svg>
<svg class="ic" style="left:663px;top:52px" width="14" height="14" viewBox="0 0 14 14" ><rect x="0.6" y="0.6" width="12.8" height="12.8" fill="#f4f4f4" stroke="#000" stroke-width="1.2"/><path d="M4 12 L4 2.5 L8 2.5 Q10.5 2.5 10.5 5 Q10.5 7.5 8 7.5 L4 7.5" stroke="#000" stroke-width="2" fill="none"/></svg>
<svg class="ic" style="left:686px;top:52px" width="14" height="14" viewBox="0 0 14 14" ><rect x="0.6" y="0.6" width="12.8" height="12.8" fill="#f4f4f4" stroke="#000" stroke-width="1.2"/><rect x="3.5" y="3.5" width="5" height="4" fill="none" stroke="#000"/><path d="M5 5 L10 10 M10 7 L10 10.5 L7 10.5" stroke="#ff0000" stroke-width="1.3" fill="none"/></svg>
<svg class="ic" style="left:708px;top:52px" width="16" height="14" viewBox="0 0 16 14" ><rect x="1.5" y="1.5" width="12" height="11" fill="#f4f4f4" stroke="#000" stroke-width="1.3"/><path d="M0 0 L15 14 M15 0 L0 14" stroke="#000" stroke-width="1.3"/><path d="M11 7 L11 11 L9 11" stroke="#ff0000" stroke-width="1.2" fill="none"/><path d="M0.5 0 L0.5 14 M15 0 L15 14" stroke="#000"/></svg>
<svg class="ic" style="left:732px;top:52px" width="14" height="14" viewBox="0 0 14 14" ><rect x="0.5" y="0.5" width="6" height="6" fill="#fff" stroke="#000"/><rect x="6.5" y="7.5" width="7" height="6" fill="#fff" stroke="#000"/><path d="M2 1 L5 1 L6 0 M8 8 L11 8 L12 7" stroke="#000" fill="none"/><path d="M3 4 L11 12" stroke="#ff0000" stroke-width="1.5"/></svg>
<svg class="ic" style="left:762px;top:52px" width="15" height="14" viewBox="0 0 15 14" ><path d="M2 1 L14 13" stroke="#000"/><path d="M1 8 L5 5 L5 11 Z" fill="#ffff00" stroke="#000" stroke-width="0.8"/><path d="M6 7 L7 8 M6 10 L7 10" stroke="#000"/></svg>
<svg class="ic" style="left:786px;top:52px" width="15" height="14" viewBox="0 0 15 14" ><path d="M0.5 4.5 L4.5 0.5 L14.5 0.5 L10.5 4.5 Z" fill="#fff" stroke="#000"/><path d="M10.5 4.5 L14.5 0.5 L14.5 9.5 L10.5 13.5 Z" fill="#a8a8a8" stroke="#000"/><rect x="0.5" y="4.5" width="10" height="9" fill="#fff" stroke="#000" stroke-width="1.2"/><path d="M2 8.5 L6 5.5 L6 11.5 Z" fill="#ffff00" stroke="#000" stroke-width="0.8"/><path d="M7 6 Q9 8.5 7 11" stroke="#000" fill="none"/></svg>
<svg class="ic" style="left:817px;top:52px" width="14" height="14" viewBox="0 0 14 14" ><rect x="0.6" y="0.6" width="12.8" height="12.8" fill="#f4f4f4" stroke="#000" stroke-width="1.2"/><path d="M10 4 Q9 2.5 7 2.5 Q3.5 2.5 3.5 7 Q3.5 11.5 7 11.5 Q9 11.5 10 10" stroke="#000" stroke-width="2" fill="none"/></svg>
<svg class="ic" style="left:840px;top:52px" width="15" height="14" viewBox="0 0 15 14" ><path d="M0.5 4.5 L4.5 0.5 L14.5 0.5 L10.5 4.5 Z" fill="#fff" stroke="#000"/><path d="M10.5 4.5 L14.5 0.5 L14.5 9.5 L10.5 13.5 Z" fill="#a8a8a8" stroke="#000"/><rect x="0.5" y="4.5" width="10" height="9" fill="#fff" stroke="#000" stroke-width="1.2"/><path d="M7.5 7 Q7 6 5.5 6 Q3.5 6 3.5 8.5 Q3.5 11 5.5 11 Q7 11 7.5 10" stroke="#000" stroke-width="1.1" fill="none"/></svg>
<svg class="ic" style="left:863px;top:52px" width="14" height="14" viewBox="0 0 14 14" ><circle cx="7" cy="7" r="6" fill="#fff" stroke="#000" stroke-width="2"/><path d="M9 5 Q8.5 4 7 4 Q4 4 4 7 Q4 10 7 10 Q8.5 10 9 9" stroke="#000" stroke-width="1.2" fill="none"/></svg>
<svg class="ic" style="left:886px;top:52px" width="14" height="14" viewBox="0 0 14 14" ><rect x="0.6" y="0.6" width="12.8" height="12.8" fill="#f4f4f4" stroke="#000" stroke-width="1.2"/><path d="M2.5 3 L4.5 11 L7 5.5 L9.5 11 L11.5 3" stroke="#000" stroke-width="2.2" fill="none"/></svg>
<svg class="ic" style="left:909px;top:52px" width="15" height="14" viewBox="0 0 15 14" ><path d="M0.5 4.5 L4.5 0.5 L14.5 0.5 L10.5 4.5 Z" fill="#fff" stroke="#000"/><path d="M10.5 4.5 L14.5 0.5 L14.5 9.5 L10.5 13.5 Z" fill="#a8a8a8" stroke="#000"/><rect x="0.5" y="4.5" width="10" height="9" fill="#fff" stroke="#000" stroke-width="1.2"/><path d="M2 6.5 L3.5 12 L5.5 8.5 L7.5 12 L9 6.5" stroke="#000" stroke-width="1.8" fill="none"/></svg>
<svg class="ic" style="left:932px;top:52px" width="14" height="14" viewBox="0 0 14 14" ><circle cx="7" cy="7" r="6" fill="#fff" stroke="#000" stroke-width="2"/><path d="M3.5 4.5 L5 10 L7 6.5 L9 10 L10.5 4.5" stroke="#000" stroke-width="1.6" fill="none"/></svg>
<div class="t" style="left:1013px;top:51.95px;font-size:14px;font-weight:bold">Time of day</div>
</body></html>
